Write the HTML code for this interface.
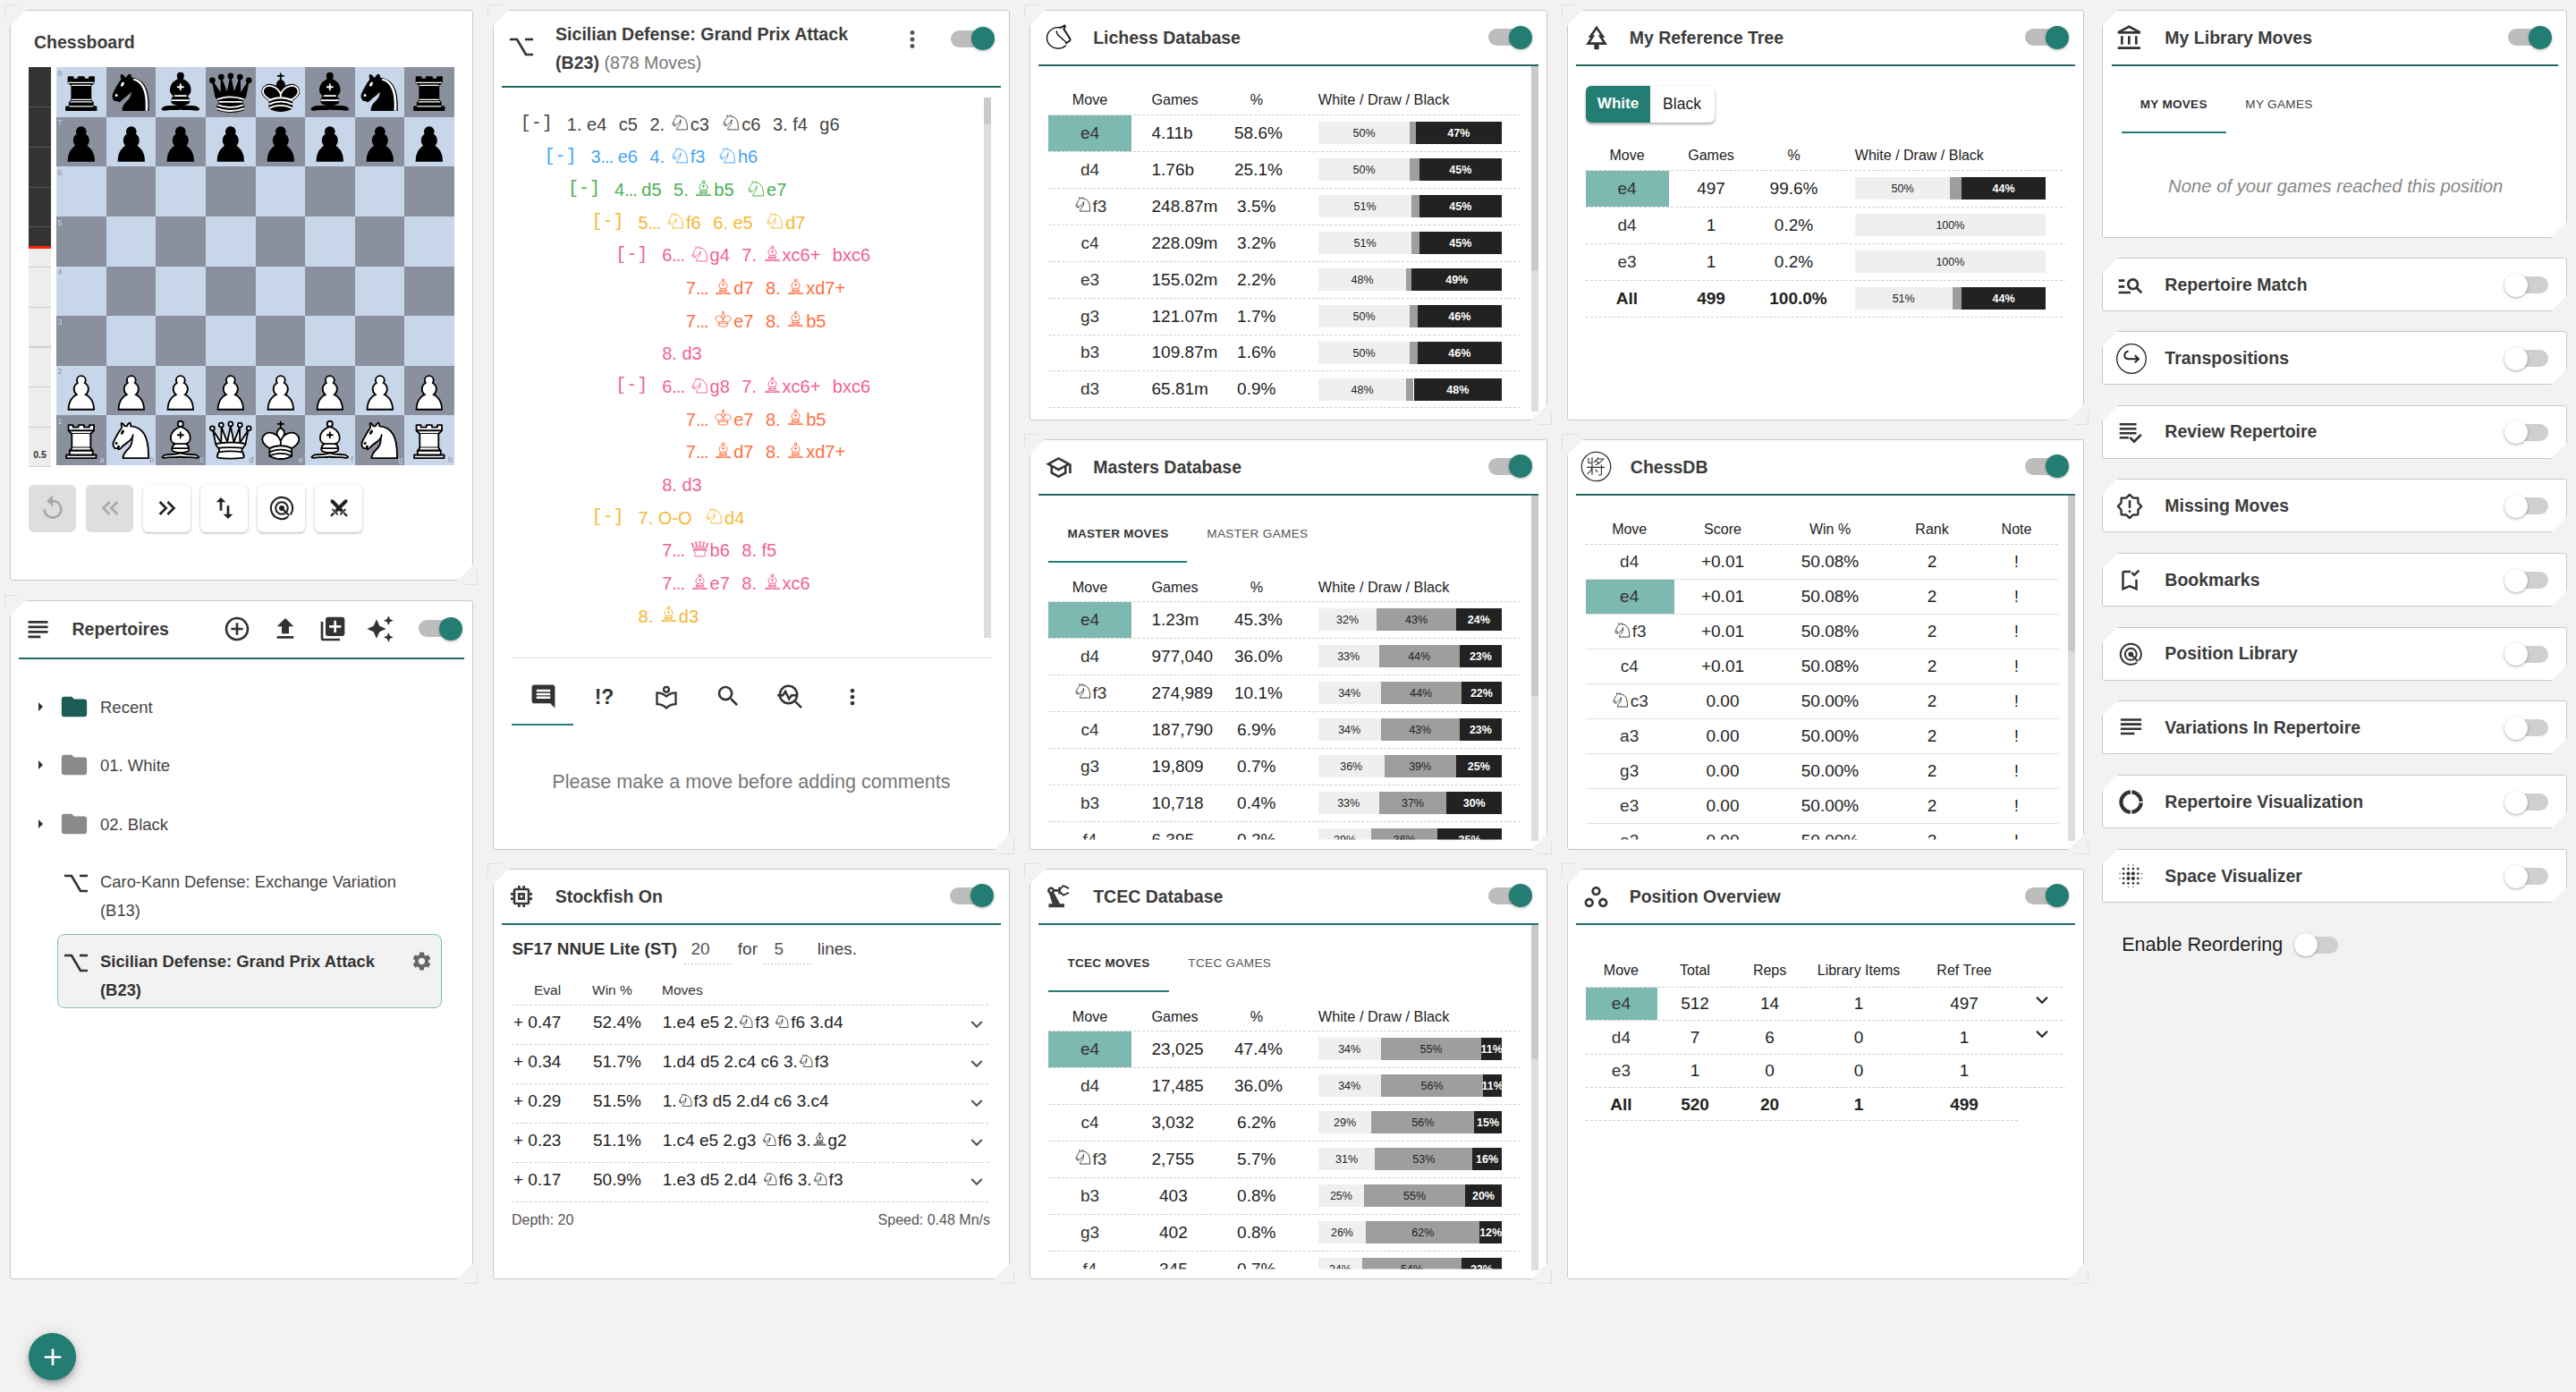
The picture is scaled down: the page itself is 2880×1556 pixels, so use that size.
<!DOCTYPE html><html><head><meta charset="utf-8"><style>
*{box-sizing:border-box}
html,body{margin:0;padding:0}
body{background:#f2f2f2;width:2880px;height:1556px;overflow:hidden;position:relative;font-family:"Liberation Sans",sans-serif;color:#333}
.card{position:absolute;background:#fff;border:1px solid #c8c8c8;border-radius:3px;clip-path:polygon(18px 0,100% 0,100% calc(100% - 18px),calc(100% - 18px) 100%,0 100%,0 18px)}
.brk{position:absolute}
.t{position:absolute;white-space:nowrap;line-height:0}
.tc{transform:translateX(-50%)}
.tr{transform:translateX(-100%)}
.r{position:absolute;display:block}
.clip{position:absolute;left:0;top:0;width:2880px;height:1556px}
.mono{font-family:"Liberation Mono",monospace}
.fgw{display:inline-block;position:relative;height:0;overflow:visible}
</style></head><body><svg width="0" height="0" style="position:absolute"><defs>
<symbol id="wp" viewBox="0 0 45 45"><path d="m 22.5,9 c -2.21,0 -4,1.79 -4,4 0,0.89 0.29,1.71 0.78,2.38 C 17.33,16.5 16,18.59 16,21 c 0,2.03 0.94,3.84 2.41,5.03 C 15.41,27.09 11,31.58 11,39.5 H 34 C 34,31.58 29.59,27.09 26.59,26.03 28.06,24.84 29,23.03 29,21 29,18.59 27.67,16.5 25.72,15.38 26.21,14.71 26.5,13.89 26.5,13 c 0,-2.21 -1.79,-4 -4,-4 z" fill="#fff" stroke="#000" stroke-width="1.5" stroke-linecap="round"/></symbol>
<symbol id="bp" viewBox="0 0 45 45"><path d="m 22.5,9 c -2.21,0 -4,1.79 -4,4 0,0.89 0.29,1.71 0.78,2.38 C 17.33,16.5 16,18.59 16,21 c 0,2.03 0.94,3.84 2.41,5.03 C 15.41,27.09 11,31.58 11,39.5 H 34 C 34,31.58 29.59,27.09 26.59,26.03 28.06,24.84 29,23.03 29,21 29,18.59 27.67,16.5 25.72,15.38 26.21,14.71 26.5,13.89 26.5,13 c 0,-2.21 -1.79,-4 -4,-4 z" fill="#000" stroke="#000" stroke-width="1.5" stroke-linecap="round"/></symbol>
<symbol id="wr" viewBox="0 0 45 45"><g fill="#fff" stroke="#000" stroke-width="1.5" stroke-linecap="round" stroke-linejoin="round"><path d="M 9,39 L 36,39 L 36,36 L 9,36 L 9,39 z" stroke-linecap="butt"/><path d="M 12,36 L 12,32 L 33,32 L 33,36 L 12,36 z" stroke-linecap="butt"/><path d="M 11,14 L 11,9 L 15,9 L 15,11 L 20,11 L 20,9 L 25,9 L 25,11 L 30,11 L 30,9 L 34,9 L 34,14" stroke-linecap="butt"/><path d="M 34,14 L 31,17 L 14,17 L 11,14"/><path d="M 31,17 L 31,29.5 L 14,29.5 L 14,17" stroke-linecap="butt" stroke-linejoin="miter"/><path d="M 31,29.5 L 32.5,32 L 12.5,32 L 14,29.5"/><path d="M 11,14 L 34,14" fill="none" stroke-linejoin="miter"/></g></symbol>
<symbol id="br" viewBox="0 0 45 45"><g fill="#000" stroke="#000" stroke-width="1.5" stroke-linecap="round" stroke-linejoin="round"><path d="M 9,39 L 36,39 L 36,36 L 9,36 L 9,39 z" stroke-linecap="butt"/><path d="M 12.5,32 L 14,29.5 L 31,29.5 L 32.5,32 L 12.5,32 z" stroke-linecap="butt"/><path d="M 12,36 L 12,32 L 33,32 L 33,36 L 12,36 z" stroke-linecap="butt"/><path d="M 14,29.5 L 14,16.5 L 31,16.5 L 31,29.5 L 14,29.5 z" stroke-linecap="butt" stroke-linejoin="miter"/><path d="M 14,16.5 L 11,14 L 34,14 L 31,16.5 L 14,16.5 z" stroke-linecap="butt"/><path d="M 11,14 L 11,9 L 15,9 L 15,11 L 20,11 L 20,9 L 25,9 L 25,11 L 30,11 L 30,9 L 34,9 L 34,14 L 11,14 z" stroke-linecap="butt"/><path d="M 12,35.5 L 33,35.5 M 13,31.5 L 32,31.5 M 14,29.5 L 31,29.5 M 14,16.5 L 31,16.5 M 11,14 L 34,14" fill="none" stroke="#fff" stroke-width="1" stroke-linejoin="miter"/></g></symbol>
<symbol id="wn" viewBox="0 0 45 45"><g fill="none" stroke="#000" stroke-width="1.5" stroke-linecap="round" stroke-linejoin="round"><path d="M 22,10 C 32.5,11 38.5,18 38,39 L 15,39 C 15,30 25,32.5 23,18" fill="#fff"/><path d="M 24,18 C 24.38,20.91 18.45,25.37 16,27 C 13,29 13.18,31.34 11,31 C 9.958,30.06 12.41,27.96 11,28 C 10,28 11.19,29.23 10,30 C 9,30 5.997,31 6,26 C 6,24 12,14 12,14 C 12,14 13.89,12.1 14,10.5 C 13.27,9.506 13.5,8.5 13.5,7.5 C 14.5,6.5 16.5,10 16.5,10 L 18.5,10 C 18.5,10 19.28,8.008 21,7 C 22,7 22,10 22,10" fill="#fff"/><path d="M 9.5 25.5 A 0.5 0.5 0 1 1 8.5,25.5 A 0.5 0.5 0 1 1 9.5 25.5 z" fill="#000"/><path d="M 15 15.5 A 0.5 1.5 0 1 1 14,15.5 A 0.5 1.5 0 1 1 15 15.5 z" transform="matrix(0.866,0.5,-0.5,0.866,9.693,-5.173)" fill="#000"/></g></symbol>
<symbol id="bn" viewBox="0 0 45 45"><g fill="none" stroke="#000" stroke-width="1.5" stroke-linecap="round" stroke-linejoin="round"><path d="M 22,10 C 32.5,11 38.5,18 38,39 L 15,39 C 15,30 25,32.5 23,18" fill="#000"/><path d="M 24,18 C 24.38,20.91 18.45,25.37 16,27 C 13,29 13.18,31.34 11,31 C 9.958,30.06 12.41,27.96 11,28 C 10,28 11.19,29.23 10,30 C 9,30 5.997,31 6,26 C 6,24 12,14 12,14 C 12,14 13.89,12.1 14,10.5 C 13.27,9.506 13.5,8.5 13.5,7.5 C 14.5,6.5 16.5,10 16.5,10 L 18.5,10 C 18.5,10 19.28,8.008 21,7 C 22,7 22,10 22,10" fill="#000"/><path d="M 9.5 25.5 A 0.5 0.5 0 1 1 8.5,25.5 A 0.5 0.5 0 1 1 9.5 25.5 z" fill="#fff" stroke="#fff"/><path d="M 15 15.5 A 0.5 1.5 0 1 1 14,15.5 A 0.5 1.5 0 1 1 15 15.5 z" transform="matrix(0.866,0.5,-0.5,0.866,9.693,-5.173)" fill="#fff" stroke="#fff"/><path d="M 24.55,10.4 L 24.1,11.85 L 24.6,12 C 27.75,13 30.25,14.49 32.5,18.75 C 34.75,23.01 35.75,29.06 35.25,39 L 35.2,39.5 L 37.45,39.5 L 37.5,39 C 38,28.94 36.62,22.15 34.25,17.66 C 31.88,13.17 28.46,11.02 25.06,10.5 L 24.55,10.4 z" fill="#fff" stroke="none"/></g></symbol>
<symbol id="wb" viewBox="0 0 45 45"><g fill="none" stroke="#000" stroke-width="1.5" stroke-linecap="round" stroke-linejoin="round"><g fill="#fff" stroke-linecap="butt"><path d="M 9,36 C 12.39,35.03 19.11,36.43 22.5,34 C 25.89,36.43 32.61,35.03 36,36 C 36,36 37.65,36.54 39,38 C 38.32,38.97 37.35,38.99 36,38.5 C 32.61,37.53 25.89,38.96 22.5,37.5 C 19.11,38.96 12.39,37.53 9,38.5 C 7.65,38.99 6.68,38.97 6,38 C 7.35,36.54 9,36 9,36 z"/><path d="M 15,32 C 17.5,34.5 27.5,34.5 30,32 C 30.5,30.5 30,30 30,30 C 30,27.5 27.5,26 27.5,26 C 33,24.5 33.5,14.5 22.5,10.5 C 11.5,14.5 12,24.5 17.5,26 C 17.5,26 15,27.5 15,30 C 15,30 14.5,30.5 15,32 z"/><path d="M 25 8 A 2.5 2.5 0 1 1 20,8 A 2.5 2.5 0 1 1 25 8 z"/></g><path d="M 17.5,26 L 27.5,26 M 15,30 L 30,30 M 22.5,15.5 L 22.5,20.5 M 20,18 L 25,18" stroke-linejoin="miter"/></g></symbol>
<symbol id="bb" viewBox="0 0 45 45"><g fill="none" stroke="#000" stroke-width="1.5" stroke-linecap="round" stroke-linejoin="round"><g fill="#000" stroke-linecap="butt"><path d="M 9,36 C 12.39,35.03 19.11,36.43 22.5,34 C 25.89,36.43 32.61,35.03 36,36 C 36,36 37.65,36.54 39,38 C 38.32,38.97 37.35,38.99 36,38.5 C 32.61,37.53 25.89,38.96 22.5,37.5 C 19.11,38.96 12.39,37.53 9,38.5 C 7.65,38.99 6.68,38.97 6,38 C 7.35,36.54 9,36 9,36 z"/><path d="M 15,32 C 17.5,34.5 27.5,34.5 30,32 C 30.5,30.5 30,30 30,30 C 30,27.5 27.5,26 27.5,26 C 33,24.5 33.5,14.5 22.5,10.5 C 11.5,14.5 12,24.5 17.5,26 C 17.5,26 15,27.5 15,30 C 15,30 14.5,30.5 15,32 z"/><path d="M 25 8 A 2.5 2.5 0 1 1 20,8 A 2.5 2.5 0 1 1 25 8 z"/></g><path d="M 17.5,26 L 27.5,26 M 15,30 L 30,30 M 22.5,15.5 L 22.5,20.5 M 20,18 L 25,18" stroke="#fff" stroke-linejoin="miter"/></g></symbol>
<symbol id="wq" viewBox="0 0 45 45"><g fill="#fff" stroke="#000" stroke-width="1.5" stroke-linejoin="round"><path d="M 9,26 C 17.5,24.5 30,24.5 36,26 L 38.5,13.5 L 31,25 L 30.7,10.9 L 25.5,24.5 L 22.5,10 L 19.5,24.5 L 14.3,10.9 L 14,25 L 6.5,13.5 L 9,26 z"/><path d="M 9,26 C 9,28 10.5,28 11.5,30 C 12.5,31.5 12.5,31 12,33.5 C 10.5,34.5 11,36 11,36 C 9.5,37.5 11,38.5 11,38.5 C 17.5,39.5 27.5,39.5 34,38.5 C 34,38.5 35.5,37.5 34,36 C 34,36 34.5,34.5 33,33.5 C 32.5,31 32.5,31.5 33.5,30 C 34.5,28 36,28 36,26 C 27.5,24.5 17.5,24.5 9,26 z"/><path d="M 11.5,30 C 15,29 30,29 33.5,30" fill="none"/><path d="M 12,33.5 C 18,32.5 27,32.5 33,33.5" fill="none"/><circle cx="6" cy="12" r="2"/><circle cx="14" cy="9" r="2"/><circle cx="22.5" cy="8" r="2"/><circle cx="31" cy="9" r="2"/><circle cx="39" cy="12" r="2"/></g></symbol>
<symbol id="bq" viewBox="0 0 45 45"><g fill="#000" stroke="#000" stroke-width="1.5" stroke-linecap="round" stroke-linejoin="round"><path d="M 9,26 C 17.5,24.5 30,24.5 36,26 L 38.5,13.5 L 31,25 L 30.7,10.9 L 25.5,24.5 L 22.5,10 L 19.5,24.5 L 14.3,10.9 L 14,25 L 6.5,13.5 L 9,26 z" stroke-linecap="butt"/><path d="m 9,26 c 0,2 1.5,2 2.5,4 1,1.5 1,1 0.5,3.5 -1.5,1 -1,2.5 -1,2.5 -1.5,1.5 0,2.5 0,2.5 6.5,1 16.5,1 23,0 0,0 1.5,-1 0,-2.5 0,0 0.5,-1.5 -1,-2.5 -0.5,-2.5 -0.5,-2 0.5,-3.5 1,-2 2.5,-2 2.5,-4 -8.5,-1.5 -18.5,-1.5 -27,0 z"/><path d="M 11.5,30 C 15,29 30,29 33.5,30"/><path d="m 12,33.5 c 6,-1 15,-1 21,0"/><circle cx="6" cy="12" r="2"/><circle cx="14" cy="9" r="2"/><circle cx="22.5" cy="8" r="2"/><circle cx="31" cy="9" r="2"/><circle cx="39" cy="12" r="2"/><path d="M 11,38.5 A 35,35 1 0 0 34,38.5" fill="none" stroke-linecap="butt"/><g fill="none" stroke="#fff"><path d="M 11,29 A 35,35 1 0 1 34,29"/><path d="M 12.5,31.5 L 32.5,31.5"/><path d="M 11.5,34.5 A 35,35 1 0 0 33.5,34.5"/><path d="M 10.5,37.5 A 35,35 1 0 0 34.5,37.5"/></g></g></symbol>
<symbol id="wk" viewBox="0 0 45 45"><g fill="none" stroke="#000" stroke-width="1.5" stroke-linecap="round" stroke-linejoin="round"><path d="M 22.5,11.63 L 22.5,6" stroke-linejoin="miter"/><path d="M 20,8 L 25,8" stroke-linejoin="miter"/><path d="M 22.5,25 C 22.5,25 27,17.5 25.5,14.5 C 25.5,14.5 24.5,12 22.5,12 C 20.5,12 19.5,14.5 19.5,14.5 C 18,17.5 22.5,25 22.5,25" fill="#fff" stroke-linecap="butt" stroke-linejoin="miter"/><path d="M 12.5,37 C 18,40.5 27,40.5 32.5,37 L 32.5,30 C 32.5,30 41.5,25.5 38.5,19.5 C 34.5,13 25,16 22.5,23.5 L 22.5,27 L 22.5,23.5 C 20,16 10.5,13 6.5,19.5 C 3.5,25.5 12.5,30 12.5,30 L 12.5,37" fill="#fff"/><path d="M 12.5,30 C 18,27 27,27 32.5,30"/><path d="M 12.5,33.5 C 18,30.5 27,30.5 32.5,33.5"/><path d="M 12.5,37 C 18,34 27,34 32.5,37"/></g></symbol>
<symbol id="bk" viewBox="0 0 45 45"><g fill="none" stroke="#000" stroke-width="1.5" stroke-linecap="round" stroke-linejoin="round"><path d="M 22.5,11.63 L 22.5,6" stroke-linejoin="miter"/><path d="M 22.5,25 C 22.5,25 27,17.5 25.5,14.5 C 25.5,14.5 24.5,12 22.5,12 C 20.5,12 19.5,14.5 19.5,14.5 C 18,17.5 22.5,25 22.5,25" fill="#000" stroke-linecap="butt" stroke-linejoin="miter"/><path d="M 12.5,37 C 18,40.5 27,40.5 32.5,37 L 32.5,30 C 32.5,30 41.5,25.5 38.5,19.5 C 34.5,13 25,16 22.5,23.5 L 22.5,27 L 22.5,23.5 C 20,16 10.5,13 6.5,19.5 C 3.5,25.5 12.5,30 12.5,30 L 12.5,37" fill="#000"/><path d="M 20,8 L 25,8" stroke-linejoin="miter"/><path d="M 32,29.5 C 32,29.5 40.5,25.5 38.03,19.85 C 34.15,14 25,18 22.5,24.5 L 22.5,26.6 L 22.5,24.5 C 20,18 10.85,14 6.97,19.85 C 4.5,25.5 13,29.5 13,29.5" stroke="#fff"/><path d="M 12.5,30 C 18,27 27,27 32.5,30 M 12.5,33.5 C 18,30.5 27,30.5 32.5,33.5 M 12.5,37 C 18,34 27,34 32.5,37" stroke="#fff"/></g></symbol>
<symbol id="fn" viewBox="0 0 45 45"><g fill="none" stroke="currentColor" stroke-width="1.9" stroke-linecap="round" stroke-linejoin="round"><path d="M 22,10 C 32.5,11 38.5,18 38,39 L 15,39 C 15,30 25,32.5 23,18"/><path d="M 24,18 C 24.38,20.91 18.45,25.37 16,27 C 13,29 13.18,31.34 11,31 C 9.958,30.06 12.41,27.96 11,28 C 10,28 11.19,29.23 10,30 C 9,30 5.997,31 6,26 C 6,24 12,14 12,14 C 12,14 13.89,12.1 14,10.5 C 13.27,9.506 13.5,8.5 13.5,7.5 C 14.5,6.5 16.5,10 16.5,10 L 18.5,10 C 18.5,10 19.28,8.008 21,7 C 22,7 22,10 22,10"/><path d="M 9.5 25.5 A 0.5 0.5 0 1 1 8.5,25.5 A 0.5 0.5 0 1 1 9.5 25.5 z"/></g></symbol>
<symbol id="fb" viewBox="0 0 45 45"><g fill="none" stroke="currentColor" stroke-width="1.9" stroke-linecap="round" stroke-linejoin="round"><path d="M 9,36 C 12.39,35.03 19.11,36.43 22.5,34 C 25.89,36.43 32.61,35.03 36,36 C 36,36 37.65,36.54 39,38 C 38.32,38.97 37.35,38.99 36,38.5 C 32.61,37.53 25.89,38.96 22.5,37.5 C 19.11,38.96 12.39,37.53 9,38.5 C 7.65,38.99 6.68,38.97 6,38 C 7.35,36.54 9,36 9,36 z"/><path d="M 15,32 C 17.5,34.5 27.5,34.5 30,32 C 30.5,30.5 30,30 30,30 C 30,27.5 27.5,26 27.5,26 C 33,24.5 33.5,14.5 22.5,10.5 C 11.5,14.5 12,24.5 17.5,26 C 17.5,26 15,27.5 15,30 C 15,30 14.5,30.5 15,32 z"/><path d="M 25 8 A 2.5 2.5 0 1 1 20,8 A 2.5 2.5 0 1 1 25 8 z"/><path d="M 17.5,26 L 27.5,26 M 15,30 L 30,30 M 22.5,15.5 L 22.5,20.5 M 20,18 L 25,18"/></g></symbol>
<symbol id="fk" viewBox="0 0 45 45"><g fill="none" stroke="currentColor" stroke-width="1.9" stroke-linecap="round" stroke-linejoin="round"><path d="M 22.5,11.63 L 22.5,6"/><path d="M 20,8 L 25,8"/><path d="M 22.5,25 C 22.5,25 27,17.5 25.5,14.5 C 25.5,14.5 24.5,12 22.5,12 C 20.5,12 19.5,14.5 19.5,14.5 C 18,17.5 22.5,25 22.5,25"/><path d="M 12.5,37 C 18,40.5 27,40.5 32.5,37 L 32.5,30 C 32.5,30 41.5,25.5 38.5,19.5 C 34.5,13 25,16 22.5,23.5 L 22.5,27 L 22.5,23.5 C 20,16 10.5,13 6.5,19.5 C 3.5,25.5 12.5,30 12.5,30 L 12.5,37"/><path d="M 12.5,30 C 18,27 27,27 32.5,30"/><path d="M 12.5,33.5 C 18,30.5 27,30.5 32.5,33.5"/></g></symbol>
<symbol id="fq" viewBox="0 0 45 45"><g fill="none" stroke="currentColor" stroke-width="1.9" stroke-linejoin="round"><path d="M 9,26 C 17.5,24.5 30,24.5 36,26 L 38.5,13.5 L 31,25 L 30.7,10.9 L 25.5,24.5 L 22.5,10 L 19.5,24.5 L 14.3,10.9 L 14,25 L 6.5,13.5 L 9,26 z"/><path d="M 9,26 C 9,28 10.5,28 11.5,30 C 12.5,31.5 12.5,31 12,33.5 C 10.5,34.5 11,36 11,36 C 9.5,37.5 11,38.5 11,38.5 C 17.5,39.5 27.5,39.5 34,38.5 C 34,38.5 35.5,37.5 34,36 C 34,36 34.5,34.5 33,33.5 C 32.5,31 32.5,31.5 33.5,30 C 34.5,28 36,28 36,26 C 27.5,24.5 17.5,24.5 9,26 z"/><circle cx="6" cy="12" r="2"/><circle cx="14" cy="9" r="2"/><circle cx="22.5" cy="8" r="2"/><circle cx="31" cy="9" r="2"/><circle cx="39" cy="12" r="2"/></g></symbol>
</defs></svg><div class="card " style="left:11px;top:11px;width:518px;height:638px"></div><div class="brk" style="left:5px;top:5px;width:15px;height:15px;border-left:1px solid #e0e0e0;border-top:1px solid #e0e0e0"></div><div class="brk" style="left:519px;top:639px;width:15px;height:15px;border-right:1px solid #e0e0e0;border-bottom:1px solid #e0e0e0"></div><div class="t " style="left:38px;top:47px;font-size:19.5px;font-weight:700;color:#3b3b3b;">Chessboard</div><div class="r" style="left:32px;top:75px;width:25px;height:200px;background:#333"></div><div class="r" style="left:32px;top:275px;width:25px;height:3px;background:#ff2200"></div><div class="r" style="left:32px;top:278px;width:25px;height:244px;background:#ededed"></div><div class="r" style="left:32px;top:119.2px;width:25px;height:1.2px;background:#555"></div><div class="r" style="left:32px;top:163.9px;width:25px;height:1.2px;background:#555"></div><div class="r" style="left:32px;top:208.60000000000002px;width:25px;height:1.2px;background:#555"></div><div class="r" style="left:32px;top:253.3px;width:25px;height:1.2px;background:#555"></div><div class="r" style="left:32px;top:298.0px;width:25px;height:1.2px;background:#cfcfcf"></div><div class="r" style="left:32px;top:342.70000000000005px;width:25px;height:1.2px;background:#cfcfcf"></div><div class="r" style="left:32px;top:387.40000000000003px;width:25px;height:1.2px;background:#cfcfcf"></div><div class="r" style="left:32px;top:432.1px;width:25px;height:1.2px;background:#cfcfcf"></div><div class="r" style="left:32px;top:476.8px;width:25px;height:1.2px;background:#cfcfcf"></div><div class="r" style="left:32px;top:520.5px;width:25px;height:1.5px;background:#cfcfcf"></div><div class="t tc" style="left:44.5px;top:508px;font-size:10.5px;font-weight:700;color:#333;">0.5</div><div class="r" style="left:63.0px;top:75.0px;width:56.025px;height:56.025px;background:#c8d6ea"></div><div class="r" style="left:118.625px;top:75.0px;width:56.025px;height:56.025px;background:#8a909e"></div><div class="r" style="left:174.25px;top:75.0px;width:56.025px;height:56.025px;background:#c8d6ea"></div><div class="r" style="left:229.875px;top:75.0px;width:56.025px;height:56.025px;background:#8a909e"></div><div class="r" style="left:285.5px;top:75.0px;width:56.025px;height:56.025px;background:#c8d6ea"></div><div class="r" style="left:341.125px;top:75.0px;width:56.025px;height:56.025px;background:#8a909e"></div><div class="r" style="left:396.75px;top:75.0px;width:56.025px;height:56.025px;background:#c8d6ea"></div><div class="r" style="left:452.375px;top:75.0px;width:56.025px;height:56.025px;background:#8a909e"></div><div class="r" style="left:63.0px;top:130.625px;width:56.025px;height:56.025px;background:#8a909e"></div><div class="r" style="left:118.625px;top:130.625px;width:56.025px;height:56.025px;background:#c8d6ea"></div><div class="r" style="left:174.25px;top:130.625px;width:56.025px;height:56.025px;background:#8a909e"></div><div class="r" style="left:229.875px;top:130.625px;width:56.025px;height:56.025px;background:#c8d6ea"></div><div class="r" style="left:285.5px;top:130.625px;width:56.025px;height:56.025px;background:#8a909e"></div><div class="r" style="left:341.125px;top:130.625px;width:56.025px;height:56.025px;background:#c8d6ea"></div><div class="r" style="left:396.75px;top:130.625px;width:56.025px;height:56.025px;background:#8a909e"></div><div class="r" style="left:452.375px;top:130.625px;width:56.025px;height:56.025px;background:#c8d6ea"></div><div class="r" style="left:63.0px;top:186.25px;width:56.025px;height:56.025px;background:#c8d6ea"></div><div class="r" style="left:118.625px;top:186.25px;width:56.025px;height:56.025px;background:#8a909e"></div><div class="r" style="left:174.25px;top:186.25px;width:56.025px;height:56.025px;background:#c8d6ea"></div><div class="r" style="left:229.875px;top:186.25px;width:56.025px;height:56.025px;background:#8a909e"></div><div class="r" style="left:285.5px;top:186.25px;width:56.025px;height:56.025px;background:#c8d6ea"></div><div class="r" style="left:341.125px;top:186.25px;width:56.025px;height:56.025px;background:#8a909e"></div><div class="r" style="left:396.75px;top:186.25px;width:56.025px;height:56.025px;background:#c8d6ea"></div><div class="r" style="left:452.375px;top:186.25px;width:56.025px;height:56.025px;background:#8a909e"></div><div class="r" style="left:63.0px;top:241.875px;width:56.025px;height:56.025px;background:#8a909e"></div><div class="r" style="left:118.625px;top:241.875px;width:56.025px;height:56.025px;background:#c8d6ea"></div><div class="r" style="left:174.25px;top:241.875px;width:56.025px;height:56.025px;background:#8a909e"></div><div class="r" style="left:229.875px;top:241.875px;width:56.025px;height:56.025px;background:#c8d6ea"></div><div class="r" style="left:285.5px;top:241.875px;width:56.025px;height:56.025px;background:#8a909e"></div><div class="r" style="left:341.125px;top:241.875px;width:56.025px;height:56.025px;background:#c8d6ea"></div><div class="r" style="left:396.75px;top:241.875px;width:56.025px;height:56.025px;background:#8a909e"></div><div class="r" style="left:452.375px;top:241.875px;width:56.025px;height:56.025px;background:#c8d6ea"></div><div class="r" style="left:63.0px;top:297.5px;width:56.025px;height:56.025px;background:#c8d6ea"></div><div class="r" style="left:118.625px;top:297.5px;width:56.025px;height:56.025px;background:#8a909e"></div><div class="r" style="left:174.25px;top:297.5px;width:56.025px;height:56.025px;background:#c8d6ea"></div><div class="r" style="left:229.875px;top:297.5px;width:56.025px;height:56.025px;background:#8a909e"></div><div class="r" style="left:285.5px;top:297.5px;width:56.025px;height:56.025px;background:#c8d6ea"></div><div class="r" style="left:341.125px;top:297.5px;width:56.025px;height:56.025px;background:#8a909e"></div><div class="r" style="left:396.75px;top:297.5px;width:56.025px;height:56.025px;background:#c8d6ea"></div><div class="r" style="left:452.375px;top:297.5px;width:56.025px;height:56.025px;background:#8a909e"></div><div class="r" style="left:63.0px;top:353.125px;width:56.025px;height:56.025px;background:#8a909e"></div><div class="r" style="left:118.625px;top:353.125px;width:56.025px;height:56.025px;background:#c8d6ea"></div><div class="r" style="left:174.25px;top:353.125px;width:56.025px;height:56.025px;background:#8a909e"></div><div class="r" style="left:229.875px;top:353.125px;width:56.025px;height:56.025px;background:#c8d6ea"></div><div class="r" style="left:285.5px;top:353.125px;width:56.025px;height:56.025px;background:#8a909e"></div><div class="r" style="left:341.125px;top:353.125px;width:56.025px;height:56.025px;background:#c8d6ea"></div><div class="r" style="left:396.75px;top:353.125px;width:56.025px;height:56.025px;background:#8a909e"></div><div class="r" style="left:452.375px;top:353.125px;width:56.025px;height:56.025px;background:#c8d6ea"></div><div class="r" style="left:63.0px;top:408.75px;width:56.025px;height:56.025px;background:#c8d6ea"></div><div class="r" style="left:118.625px;top:408.75px;width:56.025px;height:56.025px;background:#8a909e"></div><div class="r" style="left:174.25px;top:408.75px;width:56.025px;height:56.025px;background:#c8d6ea"></div><div class="r" style="left:229.875px;top:408.75px;width:56.025px;height:56.025px;background:#8a909e"></div><div class="r" style="left:285.5px;top:408.75px;width:56.025px;height:56.025px;background:#c8d6ea"></div><div class="r" style="left:341.125px;top:408.75px;width:56.025px;height:56.025px;background:#8a909e"></div><div class="r" style="left:396.75px;top:408.75px;width:56.025px;height:56.025px;background:#c8d6ea"></div><div class="r" style="left:452.375px;top:408.75px;width:56.025px;height:56.025px;background:#8a909e"></div><div class="r" style="left:63.0px;top:464.375px;width:56.025px;height:56.025px;background:#8a909e"></div><div class="r" style="left:118.625px;top:464.375px;width:56.025px;height:56.025px;background:#c8d6ea"></div><div class="r" style="left:174.25px;top:464.375px;width:56.025px;height:56.025px;background:#8a909e"></div><div class="r" style="left:229.875px;top:464.375px;width:56.025px;height:56.025px;background:#c8d6ea"></div><div class="r" style="left:285.5px;top:464.375px;width:56.025px;height:56.025px;background:#8a909e"></div><div class="r" style="left:341.125px;top:464.375px;width:56.025px;height:56.025px;background:#c8d6ea"></div><div class="r" style="left:396.75px;top:464.375px;width:56.025px;height:56.025px;background:#8a909e"></div><div class="r" style="left:452.375px;top:464.375px;width:56.025px;height:56.025px;background:#c8d6ea"></div><svg class="r" style="left:63.01px;top:75.01px" width="55.6" height="55.6"><use href="#br"/></svg><svg class="r" style="left:118.64px;top:75.01px" width="55.6" height="55.6"><use href="#bn"/></svg><svg class="r" style="left:174.26px;top:75.01px" width="55.6" height="55.6"><use href="#bb"/></svg><svg class="r" style="left:229.89px;top:75.01px" width="55.6" height="55.6"><use href="#bq"/></svg><svg class="r" style="left:285.51px;top:75.01px" width="55.6" height="55.6"><use href="#bk"/></svg><svg class="r" style="left:341.14px;top:75.01px" width="55.6" height="55.6"><use href="#bb"/></svg><svg class="r" style="left:396.76px;top:75.01px" width="55.6" height="55.6"><use href="#bn"/></svg><svg class="r" style="left:452.39px;top:75.01px" width="55.6" height="55.6"><use href="#br"/></svg><svg class="r" style="left:63.01px;top:130.64px" width="55.6" height="55.6"><use href="#bp"/></svg><svg class="r" style="left:118.64px;top:130.64px" width="55.6" height="55.6"><use href="#bp"/></svg><svg class="r" style="left:174.26px;top:130.64px" width="55.6" height="55.6"><use href="#bp"/></svg><svg class="r" style="left:229.89px;top:130.64px" width="55.6" height="55.6"><use href="#bp"/></svg><svg class="r" style="left:285.51px;top:130.64px" width="55.6" height="55.6"><use href="#bp"/></svg><svg class="r" style="left:341.14px;top:130.64px" width="55.6" height="55.6"><use href="#bp"/></svg><svg class="r" style="left:396.76px;top:130.64px" width="55.6" height="55.6"><use href="#bp"/></svg><svg class="r" style="left:452.39px;top:130.64px" width="55.6" height="55.6"><use href="#bp"/></svg><svg class="r" style="left:63.01px;top:408.76px" width="55.6" height="55.6"><use href="#wp"/></svg><svg class="r" style="left:118.64px;top:408.76px" width="55.6" height="55.6"><use href="#wp"/></svg><svg class="r" style="left:174.26px;top:408.76px" width="55.6" height="55.6"><use href="#wp"/></svg><svg class="r" style="left:229.89px;top:408.76px" width="55.6" height="55.6"><use href="#wp"/></svg><svg class="r" style="left:285.51px;top:408.76px" width="55.6" height="55.6"><use href="#wp"/></svg><svg class="r" style="left:341.14px;top:408.76px" width="55.6" height="55.6"><use href="#wp"/></svg><svg class="r" style="left:396.76px;top:408.76px" width="55.6" height="55.6"><use href="#wp"/></svg><svg class="r" style="left:452.39px;top:408.76px" width="55.6" height="55.6"><use href="#wp"/></svg><svg class="r" style="left:63.01px;top:464.39px" width="55.6" height="55.6"><use href="#wr"/></svg><svg class="r" style="left:118.64px;top:464.39px" width="55.6" height="55.6"><use href="#wn"/></svg><svg class="r" style="left:174.26px;top:464.39px" width="55.6" height="55.6"><use href="#wb"/></svg><svg class="r" style="left:229.89px;top:464.39px" width="55.6" height="55.6"><use href="#wq"/></svg><svg class="r" style="left:285.51px;top:464.39px" width="55.6" height="55.6"><use href="#wk"/></svg><svg class="r" style="left:341.14px;top:464.39px" width="55.6" height="55.6"><use href="#wb"/></svg><svg class="r" style="left:396.76px;top:464.39px" width="55.6" height="55.6"><use href="#wn"/></svg><svg class="r" style="left:452.39px;top:464.39px" width="55.6" height="55.6"><use href="#wr"/></svg><div class="t " style="left:64.3px;top:81.7px;font-size:9px;font-weight:400;color:#8a909e;">8</div><div class="t " style="left:64.3px;top:137.325px;font-size:9px;font-weight:400;color:#c8d6ea;">7</div><div class="t " style="left:64.3px;top:192.95px;font-size:9px;font-weight:400;color:#8a909e;">6</div><div class="t " style="left:64.3px;top:248.575px;font-size:9px;font-weight:400;color:#c8d6ea;">5</div><div class="t " style="left:64.3px;top:304.2px;font-size:9px;font-weight:400;color:#8a909e;">4</div><div class="t " style="left:64.3px;top:359.825px;font-size:9px;font-weight:400;color:#c8d6ea;">3</div><div class="t " style="left:64.3px;top:415.45px;font-size:9px;font-weight:400;color:#8a909e;">2</div><div class="t " style="left:64.3px;top:471.075px;font-size:9px;font-weight:400;color:#c8d6ea;">1</div><div class="t tr" style="left:116.625px;top:513.5px;font-size:9px;font-weight:400;color:#c8d6ea;">a</div><div class="t tr" style="left:172.25px;top:513.5px;font-size:9px;font-weight:400;color:#8a909e;">b</div><div class="t tr" style="left:227.875px;top:513.5px;font-size:9px;font-weight:400;color:#c8d6ea;">c</div><div class="t tr" style="left:283.5px;top:513.5px;font-size:9px;font-weight:400;color:#8a909e;">d</div><div class="t tr" style="left:339.125px;top:513.5px;font-size:9px;font-weight:400;color:#c8d6ea;">e</div><div class="t tr" style="left:394.75px;top:513.5px;font-size:9px;font-weight:400;color:#8a909e;">f</div><div class="t tr" style="left:450.375px;top:513.5px;font-size:9px;font-weight:400;color:#c8d6ea;">g</div><div class="t tr" style="left:506.0px;top:513.5px;font-size:9px;font-weight:400;color:#8a909e;">h</div><div class="r" style="left:32px;top:542px;width:53px;height:53px;background:#dedede;border-radius:6px"></div><svg class="r" style="left:42.5px;top:551.5px;" width="32" height="32" viewBox="0 0 24 24" fill="#a8a8a8"><path d="M12 5V1L7 6l5 5V7c3.31 0 6 2.69 6 6s-2.69 6-6 6-6-2.69-6-6H4c0 4.42 3.58 8 8 8s8-3.58 8-8-3.58-8-8-8z"/></svg><div class="r" style="left:96px;top:542px;width:53px;height:53px;background:#dedede;border-radius:6px"></div><svg class="r" style="left:106.5px;top:551.5px;" width="32" height="32" viewBox="0 0 24 24" fill="#a8a8a8"><path d="M17.59 18L19 16.59 14.42 12 19 7.41 17.59 6l-6 6zM11 18l1.41-1.41L7.83 12l4.58-4.59L11 6l-6 6z"/></svg><div class="r" style="left:160px;top:542px;width:53px;height:53px;background:#fff;border-radius:6px;box-shadow:0 1px 3px rgba(0,0,0,.25),0 1px 1px rgba(0,0,0,.08)"></div><svg class="r" style="left:170.5px;top:551.5px;" width="32" height="32" viewBox="0 0 24 24" fill="#222"><path d="M6.41 6L5 7.41 9.58 12 5 16.59 6.41 18l6-6zM13 6l-1.41 1.41L16.17 12l-4.58 4.59L13 18l6-6z"/></svg><div class="r" style="left:224px;top:542px;width:53px;height:53px;background:#fff;border-radius:6px;box-shadow:0 1px 3px rgba(0,0,0,.25),0 1px 1px rgba(0,0,0,.08)"></div><svg class="r" style="left:234.5px;top:551.5px;" width="32" height="32" viewBox="0 0 24 24" fill="#222"><path d="M16 17.01V10h-2v7.01h-3L15 21l4-3.99h-3zM9 3L5 6.99h3V14h2V6.99h3L9 3z"/></svg><div class="r" style="left:288px;top:542px;width:53px;height:53px;background:#fff;border-radius:6px;box-shadow:0 1px 3px rgba(0,0,0,.25),0 1px 1px rgba(0,0,0,.08)"></div><svg class="r" style="left:300.80px;top:553.80px" width="28.00" height="28.00" viewBox="0 0 28 28" fill="none" stroke="#222" stroke-width="2.1"><path d="M23.66 21.28A12.1 12.1 0 1 0 21.28 23.66"/><circle cx="14" cy="14" r="6.8"/><path d="M14 14L22.3 22.3"/><circle cx="14" cy="14" r="2" fill="#222"/></svg><div class="r" style="left:352px;top:542px;width:53px;height:53px;background:#fff;border-radius:6px;box-shadow:0 1px 3px rgba(0,0,0,.25),0 1px 1px rgba(0,0,0,.08)"></div><svg class="r" style="left:364.5px;top:554.5px;" width="28" height="28" viewBox="0 0 24 24" fill="#222"><g transform="translate(0 -1)"><g transform="rotate(45 12 12)"><path d="M12 0.7L13.7 2.5V16.2H10.3V2.5z"/><rect x="8.3" y="16.6" width="7.4" height="1.5"/><rect x="11" y="18.6" width="2" height="4.6" rx="1"/></g><g transform="rotate(-45 12 12)"><path d="M12 0.7L13.7 2.5V16.2H10.3V2.5z"/><rect x="8.3" y="16.6" width="7.4" height="1.5"/><rect x="11" y="18.6" width="2" height="4.6" rx="1"/></g></g></svg><div class="card " style="left:11px;top:671px;width:518px;height:759px"></div><div class="brk" style="left:5px;top:665px;width:15px;height:15px;border-left:1px solid #e0e0e0;border-top:1px solid #e0e0e0"></div><div class="brk" style="left:519px;top:1420px;width:15px;height:15px;border-right:1px solid #e0e0e0;border-bottom:1px solid #e0e0e0"></div><svg class="r" style="left:26.4px;top:686.8px;" width="33" height="33" viewBox="0 0 24 24" fill="#333"><path d="M14 17H4v2h10v-2zm6-8H4v2h16V9zM4 15h16v-2H4v2zM4 5v2h16V5H4z"/></svg><div class="t " style="left:80.5px;top:703px;font-size:19.5px;font-weight:700;color:#3b3b3b;">Repertoires</div><svg class="r" style="left:248.8px;top:687px;" width="32" height="32" viewBox="0 0 24 24" fill="#333"><path d="M13 7h-2v4H7v2h4v4h2v-4h4v-2h-4V7zm-1-5C6.48 2 2 6.48 2 12s4.48 10 10 10 10-4.48 10-10S17.52 2 12 2zm0 18c-4.41 0-8-3.59-8-8s3.59-8 8-8 8 3.59 8 8-3.59 8-8 8z"/></svg><svg class="r" style="left:302.6px;top:687px;" width="32" height="32" viewBox="0 0 24 24" fill="#333"><path d="M5 20h14v-2H5v2zm0-10h4v6h6v-6h4l-7-7-7 7z"/></svg><svg class="r" style="left:355.5px;top:687px;" width="32" height="32" viewBox="0 0 24 24" fill="#333"><path d="M4 6H2v14c0 1.1.9 2 2 2h14v-2H4V6zm16-4H8c-1.1 0-2 .9-2 2v12c0 1.1.9 2 2 2h12c1.1 0 2-.9 2-2V4c0-1.1-.9-2-2-2zm-1 9h-4v4h-2v-4H9V9h4V5h2v4h4v2z"/></svg><svg class="r" style="left:409.3px;top:687px;" width="32" height="32" viewBox="0 0 24 24" fill="#333"><path d="M19 9l1.25-2.75L23 5l-2.75-1.25L19 1l-1.25 2.75L15 5l2.75 1.25L19 9zm-7.5.5L9 4 6.5 9.5 1 12l5.5 2.5L9 20l2.5-5.5L17 12l-5.5-2.5zM19 15l-1.25 2.75L15 19l2.75 1.25L19 23l1.25-2.75L23 19l-2.75-1.25L19 15z"/></svg><div class="r" style="left:468px;top:693.0px;width:47px;height:19px;background:#bdbdbd;border-radius:10px"></div><div class="r" style="left:491.0px;top:689.5px;width:26px;height:26px;background:#237d73;border-radius:50%;box-shadow:0 1px 3px rgba(0,0,0,.3)"></div><div class="r" style="left:21px;top:734.8px;width:498px;height:2px;background:#1f6b63"></div><svg class="r" style="left:33px;top:778.3px;" width="24" height="24" viewBox="0 0 24 24" fill="#333"><path d="M10 17l5-5-5-5v10z"/></svg><svg class="r" style="left:66px;top:773.3px;" width="34" height="34" viewBox="0 0 24 24" fill="#1d5b55"><path d="M10 4H4c-1.1 0-1.99.9-1.99 2L2 18c0 1.1.9 2 2 2h16c1.1 0 2-.9 2-2V8c0-1.1-.9-2-2-2h-8l-2-2z"/></svg><div class="t " style="left:112px;top:791.3px;font-size:18.5px;font-weight:400;color:#444;">Recent</div><svg class="r" style="left:33px;top:843.2px;" width="24" height="24" viewBox="0 0 24 24" fill="#333"><path d="M10 17l5-5-5-5v10z"/></svg><svg class="r" style="left:66px;top:838.2px;" width="34" height="34" viewBox="0 0 24 24" fill="#8a8a8a"><path d="M10 4H4c-1.1 0-1.99.9-1.99 2L2 18c0 1.1.9 2 2 2h16c1.1 0 2-.9 2-2V8c0-1.1-.9-2-2-2h-8l-2-2z"/></svg><div class="t " style="left:112px;top:856.2px;font-size:18.5px;font-weight:400;color:#444;">01. White</div><svg class="r" style="left:33px;top:908.5px;" width="24" height="24" viewBox="0 0 24 24" fill="#333"><path d="M10 17l5-5-5-5v10z"/></svg><svg class="r" style="left:66px;top:903.5px;" width="34" height="34" viewBox="0 0 24 24" fill="#8a8a8a"><path d="M10 4H4c-1.1 0-1.99.9-1.99 2L2 18c0 1.1.9 2 2 2h16c1.1 0 2-.9 2-2V8c0-1.1-.9-2-2-2h-8l-2-2z"/></svg><div class="t " style="left:112px;top:921.5px;font-size:18.5px;font-weight:400;color:#444;">02. Black</div><svg class="r" style="left:70px;top:973px" width="30" height="30" viewBox="0 0 30 30" fill="none" stroke="#333" stroke-width="2.6"><path d="M2 6h8l10 17h8"/><path d="M19 6h9"/></svg><div class="t " style="left:112px;top:986px;font-size:18.4px;font-weight:400;color:#444;">Caro-Kann Defense: Exchange Variation</div><div class="t " style="left:112px;top:1018px;font-size:18.4px;font-weight:400;color:#444;">(B13)</div><div class="r" style="left:64px;top:1044px;width:430px;height:83px;background:#f2f2f2;border:1.5px solid #7fc0b6;border-radius:8px"></div><svg class="r" style="left:70px;top:1062px" width="30" height="30" viewBox="0 0 30 30" fill="none" stroke="#333" stroke-width="2.6"><path d="M2 6h8l10 17h8"/><path d="M19 6h9"/></svg><div class="t " style="left:112px;top:1075px;font-size:18.4px;font-weight:700;color:#333;">Sicilian Defense: Grand Prix Attack</div><div class="t " style="left:112px;top:1107px;font-size:18.4px;font-weight:700;color:#333;">(B23)</div><svg class="r" style="left:459px;top:1062px;" width="25" height="25" viewBox="0 0 24 24" fill="#666"><path d="M19.14 12.94c.04-.3.06-.61.06-.94 0-.32-.02-.64-.07-.94l2.03-1.58c.18-.14.23-.41.12-.61l-1.92-3.32c-.12-.22-.37-.29-.59-.22l-2.39.96c-.5-.38-1.03-.7-1.62-.94l-.36-2.54c-.04-.24-.24-.41-.48-.41h-3.84c-.24 0-.43.17-.47.41l-.36 2.54c-.59.24-1.13.57-1.62.94l-2.39-.96c-.22-.08-.47 0-.59.22L2.74 8.87c-.12.21-.08.47.12.61l2.03 1.58c-.05.3-.09.63-.09.94s.02.64.07.94l-2.03 1.58c-.18.14-.23.41-.12.61l1.92 3.32c.12.22.37.29.59.22l2.39-.96c.5.38 1.03.7 1.62.94l.36 2.54c.05.24.24.41.48.41h3.84c.24 0 .44-.17.47-.41l.36-2.54c.59-.24 1.13-.56 1.62-.94l2.39.96c.22.08.47 0 .59-.22l1.92-3.32c.12-.22.07-.47-.12-.61l-2.01-1.58zM12 15.6c-1.98 0-3.6-1.62-3.6-3.6s1.62-3.6 3.6-3.6 3.6 1.62 3.6 3.6-1.62 3.6-3.6 3.6z"/></svg><div class="card " style="left:551px;top:11px;width:578px;height:939px"></div><div class="brk" style="left:545px;top:5px;width:15px;height:15px;border-left:1px solid #e0e0e0;border-top:1px solid #e0e0e0"></div><div class="brk" style="left:1119px;top:940px;width:15px;height:15px;border-right:1px solid #e0e0e0;border-bottom:1px solid #e0e0e0"></div><svg class="r" style="left:568px;top:38px" width="30" height="30" viewBox="0 0 30 30" fill="none" stroke="#333" stroke-width="2.6"><path d="M2 6h8l10 17h8"/><path d="M19 6h9"/></svg><div class="t " style="left:621px;top:38px;font-size:19.6px;font-weight:700;color:#3b3b3b;">Sicilian Defense: Grand Prix Attack</div><div class="t " style="left:621px;top:70px;font-size:19.6px;font-weight:700;color:#3b3b3b;">(B23) <span style="font-weight:400;color:#777">(878 Moves)</span></div><svg class="r" style="left:1005px;top:29px;" width="30" height="30" viewBox="0 0 24 24" fill="#555"><path d="M12 8c1.1 0 2-.9 2-2s-.9-2-2-2-2 .9-2 2 .9 2 2 2zm0 2c-1.1 0-2 .9-2 2s.9 2 2 2 2-.9 2-2-.9-2-2-2zm0 6c-1.1 0-2 .9-2 2s.9 2 2 2 2-.9 2-2-.9-2-2-2z"/></svg><div class="r" style="left:1062.6px;top:33.5px;width:47px;height:19px;background:#bdbdbd;border-radius:10px"></div><div class="r" style="left:1085.6px;top:30.0px;width:26px;height:26px;background:#237d73;border-radius:50%;box-shadow:0 1px 3px rgba(0,0,0,.3)"></div><div class="r" style="left:561px;top:95.8px;width:558px;height:2px;background:#1f6b63"></div><div class="r" style="left:1100px;top:109px;width:8px;height:604px;background:#dedede"></div><div class="r" style="left:1100px;top:109px;width:8px;height:30px;background:#cacaca"></div><div class="t " style="left:581.8px;top:138.0px;font-size:20px;font-weight:400;color:#444;font-family:'Liberation Mono',monospace">[-]</div><div class="t " style="left:633.8px;top:138.5px;font-size:20px;font-weight:400;color:#444;"><span style="margin-right:13.5px">1.&nbsp;e4</span><span style="margin-right:13.5px">c5</span><span style="margin-right:13.5px">2.&nbsp;<span class="fgw" style="width:23px"><svg width="23" height="23" style="position:absolute;left:0;bottom:-2.8px"><use href="#fn"/></svg></span>c3</span><span style="margin-right:13.5px"><span class="fgw" style="width:23px"><svg width="23" height="23" style="position:absolute;left:0;bottom:-2.8px"><use href="#fn"/></svg></span>c6</span><span style="margin-right:13.5px">3.&nbsp;f4</span><span style="margin-right:13.5px">g6</span></div><div class="t " style="left:608.4px;top:174.67000000000002px;font-size:20px;font-weight:400;color:#42a5f5;font-family:'Liberation Mono',monospace">[-]</div><div class="t " style="left:660.4px;top:175.17000000000002px;font-size:20px;font-weight:400;color:#42a5f5;"><span style="margin-right:13.5px">3<span style="letter-spacing:-1px">...</span>&nbsp;e6</span><span style="margin-right:13.5px">4.&nbsp;<span class="fgw" style="width:23px"><svg width="23" height="23" style="position:absolute;left:0;bottom:-2.8px"><use href="#fn"/></svg></span>f3</span><span style="margin-right:13.5px"><span class="fgw" style="width:23px"><svg width="23" height="23" style="position:absolute;left:0;bottom:-2.8px"><use href="#fn"/></svg></span>h6</span></div><div class="t " style="left:635.0px;top:211.34px;font-size:20px;font-weight:400;color:#4caf50;font-family:'Liberation Mono',monospace">[-]</div><div class="t " style="left:687.0px;top:211.84px;font-size:20px;font-weight:400;color:#4caf50;"><span style="margin-right:13.5px">4<span style="letter-spacing:-1px">...</span>&nbsp;d5</span><span style="margin-right:13.5px">5.&nbsp;<span class="fgw" style="width:23px"><svg width="23" height="23" style="position:absolute;left:0;bottom:-2.8px"><use href="#fb"/></svg></span>b5</span><span style="margin-right:13.5px"><span class="fgw" style="width:23px"><svg width="23" height="23" style="position:absolute;left:0;bottom:-2.8px"><use href="#fn"/></svg></span>e7</span></div><div class="t " style="left:661.5999999999999px;top:248.01px;font-size:20px;font-weight:400;color:#f6b733;font-family:'Liberation Mono',monospace">[-]</div><div class="t " style="left:713.5999999999999px;top:248.51px;font-size:20px;font-weight:400;color:#f6b733;"><span style="margin-right:13.5px">5<span style="letter-spacing:-1px">...</span>&nbsp;<span class="fgw" style="width:23px"><svg width="23" height="23" style="position:absolute;left:0;bottom:-2.8px"><use href="#fn"/></svg></span>f6</span><span style="margin-right:13.5px">6.&nbsp;e5</span><span style="margin-right:13.5px"><span class="fgw" style="width:23px"><svg width="23" height="23" style="position:absolute;left:0;bottom:-2.8px"><use href="#fn"/></svg></span>d7</span></div><div class="t " style="left:688.1999999999999px;top:284.68px;font-size:20px;font-weight:400;color:#f06292;font-family:'Liberation Mono',monospace">[-]</div><div class="t " style="left:740.1999999999999px;top:285.18px;font-size:20px;font-weight:400;color:#f06292;"><span style="margin-right:13.5px">6<span style="letter-spacing:-1px">...</span>&nbsp;<span class="fgw" style="width:23px"><svg width="23" height="23" style="position:absolute;left:0;bottom:-2.8px"><use href="#fn"/></svg></span>g4</span><span style="margin-right:13.5px">7.&nbsp;<span class="fgw" style="width:23px"><svg width="23" height="23" style="position:absolute;left:0;bottom:-2.8px"><use href="#fb"/></svg></span>xc6+</span><span style="margin-right:13.5px">bxc6</span></div><div class="t " style="left:766.8px;top:321.85px;font-size:20px;font-weight:400;color:#ff7043;"><span style="margin-right:13.5px">7<span style="letter-spacing:-1px">...</span>&nbsp;<span class="fgw" style="width:23px"><svg width="23" height="23" style="position:absolute;left:0;bottom:-2.8px"><use href="#fb"/></svg></span>d7</span><span style="margin-right:13.5px">8.&nbsp;<span class="fgw" style="width:23px"><svg width="23" height="23" style="position:absolute;left:0;bottom:-2.8px"><use href="#fb"/></svg></span>xd7+</span></div><div class="t " style="left:766.8px;top:358.52px;font-size:20px;font-weight:400;color:#ff7043;"><span style="margin-right:13.5px">7<span style="letter-spacing:-1px">...</span>&nbsp;<span class="fgw" style="width:23px"><svg width="23" height="23" style="position:absolute;left:0;bottom:-2.8px"><use href="#fk"/></svg></span>e7</span><span style="margin-right:13.5px">8.&nbsp;<span class="fgw" style="width:23px"><svg width="23" height="23" style="position:absolute;left:0;bottom:-2.8px"><use href="#fb"/></svg></span>b5</span></div><div class="t " style="left:740.1999999999999px;top:395.19px;font-size:20px;font-weight:400;color:#f06292;"><span style="margin-right:13.5px">8.&nbsp;d3</span></div><div class="t " style="left:688.1999999999999px;top:431.36px;font-size:20px;font-weight:400;color:#f06292;font-family:'Liberation Mono',monospace">[-]</div><div class="t " style="left:740.1999999999999px;top:431.86px;font-size:20px;font-weight:400;color:#f06292;"><span style="margin-right:13.5px">6<span style="letter-spacing:-1px">...</span>&nbsp;<span class="fgw" style="width:23px"><svg width="23" height="23" style="position:absolute;left:0;bottom:-2.8px"><use href="#fn"/></svg></span>g8</span><span style="margin-right:13.5px">7.&nbsp;<span class="fgw" style="width:23px"><svg width="23" height="23" style="position:absolute;left:0;bottom:-2.8px"><use href="#fb"/></svg></span>xc6+</span><span style="margin-right:13.5px">bxc6</span></div><div class="t " style="left:766.8px;top:468.53000000000003px;font-size:20px;font-weight:400;color:#ff7043;"><span style="margin-right:13.5px">7<span style="letter-spacing:-1px">...</span>&nbsp;<span class="fgw" style="width:23px"><svg width="23" height="23" style="position:absolute;left:0;bottom:-2.8px"><use href="#fk"/></svg></span>e7</span><span style="margin-right:13.5px">8.&nbsp;<span class="fgw" style="width:23px"><svg width="23" height="23" style="position:absolute;left:0;bottom:-2.8px"><use href="#fb"/></svg></span>b5</span></div><div class="t " style="left:766.8px;top:505.20000000000005px;font-size:20px;font-weight:400;color:#ff7043;"><span style="margin-right:13.5px">7<span style="letter-spacing:-1px">...</span>&nbsp;<span class="fgw" style="width:23px"><svg width="23" height="23" style="position:absolute;left:0;bottom:-2.8px"><use href="#fb"/></svg></span>d7</span><span style="margin-right:13.5px">8.&nbsp;<span class="fgw" style="width:23px"><svg width="23" height="23" style="position:absolute;left:0;bottom:-2.8px"><use href="#fb"/></svg></span>xd7+</span></div><div class="t " style="left:740.1999999999999px;top:541.87px;font-size:20px;font-weight:400;color:#f06292;"><span style="margin-right:13.5px">8.&nbsp;d3</span></div><div class="t " style="left:661.5999999999999px;top:578.04px;font-size:20px;font-weight:400;color:#f6b733;font-family:'Liberation Mono',monospace">[-]</div><div class="t " style="left:713.5999999999999px;top:578.54px;font-size:20px;font-weight:400;color:#f6b733;"><span style="margin-right:13.5px">7.&nbsp;O-O</span><span style="margin-right:13.5px"><span class="fgw" style="width:23px"><svg width="23" height="23" style="position:absolute;left:0;bottom:-2.8px"><use href="#fn"/></svg></span>d4</span></div><div class="t " style="left:740.1999999999999px;top:615.21px;font-size:20px;font-weight:400;color:#f06292;"><span style="margin-right:13.5px">7<span style="letter-spacing:-1px">...</span>&nbsp;<span class="fgw" style="width:23px"><svg width="23" height="23" style="position:absolute;left:0;bottom:-2.8px"><use href="#fq"/></svg></span>b6</span><span style="margin-right:13.5px">8.&nbsp;f5</span></div><div class="t " style="left:740.1999999999999px;top:651.88px;font-size:20px;font-weight:400;color:#f06292;"><span style="margin-right:13.5px">7<span style="letter-spacing:-1px">...</span>&nbsp;<span class="fgw" style="width:23px"><svg width="23" height="23" style="position:absolute;left:0;bottom:-2.8px"><use href="#fb"/></svg></span>e7</span><span style="margin-right:13.5px">8.&nbsp;<span class="fgw" style="width:23px"><svg width="23" height="23" style="position:absolute;left:0;bottom:-2.8px"><use href="#fb"/></svg></span>xc6</span></div><div class="t " style="left:713.5999999999999px;top:688.5500000000001px;font-size:20px;font-weight:400;color:#f6b733;"><span style="margin-right:13.5px">8.&nbsp;<span class="fgw" style="width:23px"><svg width="23" height="23" style="position:absolute;left:0;bottom:-2.8px"><use href="#fb"/></svg></span>d3</span></div><div class="r" style="left:572px;top:735px;width:536px;height:1px;background:#dcdcdc"></div><svg class="r" style="left:591.5px;top:763.2px;" width="31" height="31" viewBox="0 0 24 24" fill="#333"><path d="M21.99 4c0-1.1-.89-2-1.99-2H4c-1.1 0-2 .9-2 2v12c0 1.1.9 2 2 2h14l4 4-.01-18zM18 14H6v-2h12v2zm0-3H6V9h12v2zm0-3H6V6h12v2z"/></svg><div class="t tc" style="left:675.5px;top:779px;font-size:23px;font-weight:700;color:#333;">!?</div><svg class="r" style="left:731px;top:765px;" width="28" height="28" viewBox="0 0 24 24" fill="none"><path d="M12 11.55C9.64 9.35 6.48 8 3 8v11c3.48 0 6.64 1.35 9 3.55 2.36-2.19 5.52-3.55 9-3.55V8c-3.48 0-6.64 1.35-9 3.55z" fill="none" stroke="#333" stroke-width="2"/><circle cx="12" cy="5" r="2.5" fill="none" stroke="#333" stroke-width="2"/></svg><svg class="r" style="left:799.4px;top:763.3px;" width="30.6" height="30.6" viewBox="0 0 24 24" fill="#333"><path d="M15.5 14h-.79l-.28-.27C15.41 12.59 16 11.11 16 9.5 16 5.91 13.09 3 9.5 3S3 5.91 3 9.5 5.91 16 9.5 16c1.61 0 3.09-.59 4.23-1.57l.27.28v.79l5 4.99L20.49 19l-4.99-5zm-6 0C7.01 14 5 11.99 5 9.5S7.01 5 9.5 5 14 7.01 14 9.5 11.99 14 9.5 14z"/></svg><svg class="r" style="left:867.3px;top:761.9px;" width="33.2" height="33.2" viewBox="0 0 24 24" fill="none"><g fill="none" stroke="#333" stroke-width="1.8"><circle cx="10.5" cy="10.5" r="7"/><path d="M15.5 15.5L21 21"/><path d="M1.5 11h4.5l2-3 3 6 2-3h5"/></g></svg><svg class="r" style="left:938.5px;top:765px;" width="28" height="28" viewBox="0 0 24 24" fill="#333"><path d="M12 8c1.1 0 2-.9 2-2s-.9-2-2-2-2 .9-2 2 .9 2 2 2zm0 2c-1.1 0-2 .9-2 2s.9 2 2 2 2-.9 2-2-.9-2-2-2zm0 6c-1.1 0-2 .9-2 2s.9 2 2 2 2-.9 2-2-.9-2-2-2z"/></svg><div class="r" style="left:572px;top:808.8px;width:69px;height:2px;background:#237d73"></div><div class="t tc" style="left:840px;top:874px;font-size:21.6px;font-weight:400;color:#777;">Please make a move before adding comments</div><div class="card " style="left:551px;top:971px;width:578px;height:459px"></div><div class="brk" style="left:545px;top:965px;width:15px;height:15px;border-left:1px solid #e0e0e0;border-top:1px solid #e0e0e0"></div><div class="brk" style="left:1119px;top:1420px;width:15px;height:15px;border-right:1px solid #e0e0e0;border-bottom:1px solid #e0e0e0"></div><svg class="r" style="left:566.5px;top:985.5px;" width="32" height="32" viewBox="0 0 24 24" fill="#3b3b3b"><path d="M15 9H9v6h6V9zm-2 4h-2v-2h2v2zm8-2V9h-2V7c0-1.1-.9-2-2-2h-2V3h-2v2h-2V3H9v2H7c-1.1 0-2 .9-2 2v2H3v2h2v2H3v2h2v2c0 1.1.9 2 2 2h2v2h2v-2h2v2h2v-2h2c1.1 0 2-.9 2-2v-2h2v-2h-2v-2h2zm-4 6H7V7h10v10z"/></svg><div class="t " style="left:620.7px;top:1002px;font-size:19.5px;font-weight:700;color:#3b3b3b;">Stockfish On</div><div class="r" style="left:1062px;top:991.9px;width:47px;height:19px;background:#bdbdbd;border-radius:10px"></div><div class="r" style="left:1085.0px;top:988.4px;width:26px;height:26px;background:#237d73;border-radius:50%;box-shadow:0 1px 3px rgba(0,0,0,.3)"></div><div class="r" style="left:561px;top:1031.8px;width:558px;height:2px;background:#1f6b63"></div><div class="t " style="left:572.4px;top:1060.5px;font-size:18.9px;font-weight:700;color:#333;">SF17 NNUE Lite (ST)</div><div class="t " style="left:772.4px;top:1061px;font-size:19px;font-weight:400;color:#555;">20</div><div class="r" style="left:764.5px;top:1076.5px;width:53.5px;height:1px;background-image:linear-gradient(to right,#bbb 50%,transparent 50%);background-size:4px 1px"></div><div class="t " style="left:824.8px;top:1061px;font-size:19px;font-weight:400;color:#444;">for</div><div class="t " style="left:865.5px;top:1061px;font-size:19px;font-weight:400;color:#555;">5</div><div class="r" style="left:854px;top:1076.5px;width:53px;height:1px;background-image:linear-gradient(to right,#bbb 50%,transparent 50%);background-size:4px 1px"></div><div class="t " style="left:913.8px;top:1061px;font-size:19px;font-weight:400;color:#444;">lines.</div><div class="t tc" style="left:612px;top:1107px;font-size:15.5px;font-weight:400;color:#333;">Eval</div><div class="t " style="left:662px;top:1107px;font-size:15.5px;font-weight:400;color:#333;">Win %</div><div class="t " style="left:740px;top:1107px;font-size:15.5px;font-weight:400;color:#333;">Moves</div><div class="r" style="left:572px;top:1123.0px;width:535px;height:1px;background-image:linear-gradient(to right,#cfcfcf 60%,transparent 60%);background-size:5px 1px"></div><div class="r" style="left:572px;top:1166.95px;width:535px;height:1px;background-image:linear-gradient(to right,#cfcfcf 60%,transparent 60%);background-size:5px 1px"></div><div class="r" style="left:572px;top:1210.9px;width:535px;height:1px;background-image:linear-gradient(to right,#cfcfcf 60%,transparent 60%);background-size:5px 1px"></div><div class="r" style="left:572px;top:1254.85px;width:535px;height:1px;background-image:linear-gradient(to right,#cfcfcf 60%,transparent 60%);background-size:5px 1px"></div><div class="r" style="left:572px;top:1298.8px;width:535px;height:1px;background-image:linear-gradient(to right,#cfcfcf 60%,transparent 60%);background-size:5px 1px"></div><div class="r" style="left:572px;top:1342.75px;width:535px;height:1px;background-image:linear-gradient(to right,#cfcfcf 60%,transparent 60%);background-size:5px 1px"></div><div class="t " style="left:574px;top:1143.0px;font-size:19px;font-weight:400;color:#222;">+ 0.47</div><div class="t " style="left:663px;top:1143.0px;font-size:19px;font-weight:400;color:#222;">52.4%</div><div class="t " style="left:740.7px;top:1143.0px;font-size:19px;font-weight:400;color:#222;">1.e4 e5 2.<span class="fgw" style="width:19px"><svg width="19" height="19" style="position:absolute;left:0;bottom:-2.3px"><use href="#fn"/></svg></span>f3 <span class="fgw" style="width:19px"><svg width="19" height="19" style="position:absolute;left:0;bottom:-2.3px"><use href="#fn"/></svg></span>f6 3.d4</div><svg class="r" style="left:1079px;top:1132.0px;" width="26" height="26" viewBox="0 0 24 24" fill="#555"><path d="M16.59 8.59L12 13.17 7.41 8.59 6 10l6 6 6-6z"/></svg><div class="t " style="left:574px;top:1186.95px;font-size:19px;font-weight:400;color:#222;">+ 0.34</div><div class="t " style="left:663px;top:1186.95px;font-size:19px;font-weight:400;color:#222;">51.7%</div><div class="t " style="left:740.7px;top:1186.95px;font-size:19px;font-weight:400;color:#222;">1.d4 d5 2.c4 c6 3.<span class="fgw" style="width:19px"><svg width="19" height="19" style="position:absolute;left:0;bottom:-2.3px"><use href="#fn"/></svg></span>f3</div><svg class="r" style="left:1079px;top:1175.95px;" width="26" height="26" viewBox="0 0 24 24" fill="#555"><path d="M16.59 8.59L12 13.17 7.41 8.59 6 10l6 6 6-6z"/></svg><div class="t " style="left:574px;top:1230.9px;font-size:19px;font-weight:400;color:#222;">+ 0.29</div><div class="t " style="left:663px;top:1230.9px;font-size:19px;font-weight:400;color:#222;">51.5%</div><div class="t " style="left:740.7px;top:1230.9px;font-size:19px;font-weight:400;color:#222;">1.<span class="fgw" style="width:19px"><svg width="19" height="19" style="position:absolute;left:0;bottom:-2.3px"><use href="#fn"/></svg></span>f3 d5 2.d4 c6 3.c4</div><svg class="r" style="left:1079px;top:1219.9px;" width="26" height="26" viewBox="0 0 24 24" fill="#555"><path d="M16.59 8.59L12 13.17 7.41 8.59 6 10l6 6 6-6z"/></svg><div class="t " style="left:574px;top:1274.85px;font-size:19px;font-weight:400;color:#222;">+ 0.23</div><div class="t " style="left:663px;top:1274.85px;font-size:19px;font-weight:400;color:#222;">51.1%</div><div class="t " style="left:740.7px;top:1274.85px;font-size:19px;font-weight:400;color:#222;">1.c4 e5 2.g3 <span class="fgw" style="width:19px"><svg width="19" height="19" style="position:absolute;left:0;bottom:-2.3px"><use href="#fn"/></svg></span>f6 3.<span class="fgw" style="width:19px"><svg width="19" height="19" style="position:absolute;left:0;bottom:-2.3px"><use href="#fb"/></svg></span>g2</div><svg class="r" style="left:1079px;top:1263.85px;" width="26" height="26" viewBox="0 0 24 24" fill="#555"><path d="M16.59 8.59L12 13.17 7.41 8.59 6 10l6 6 6-6z"/></svg><div class="t " style="left:574px;top:1318.8px;font-size:19px;font-weight:400;color:#222;">+ 0.17</div><div class="t " style="left:663px;top:1318.8px;font-size:19px;font-weight:400;color:#222;">50.9%</div><div class="t " style="left:740.7px;top:1318.8px;font-size:19px;font-weight:400;color:#222;">1.e3 d5 2.d4 <span class="fgw" style="width:19px"><svg width="19" height="19" style="position:absolute;left:0;bottom:-2.3px"><use href="#fn"/></svg></span>f6 3.<span class="fgw" style="width:19px"><svg width="19" height="19" style="position:absolute;left:0;bottom:-2.3px"><use href="#fn"/></svg></span>f3</div><svg class="r" style="left:1079px;top:1307.8px;" width="26" height="26" viewBox="0 0 24 24" fill="#555"><path d="M16.59 8.59L12 13.17 7.41 8.59 6 10l6 6 6-6z"/></svg><div class="t " style="left:572px;top:1364px;font-size:16px;font-weight:400;color:#555;">Depth: 20</div><div class="t tr" style="left:1107px;top:1364px;font-size:16px;font-weight:400;color:#555;">Speed: 0.48 Mn/s</div><div class="card " style="left:1151px;top:11px;width:579px;height:459px"></div><div class="brk" style="left:1145px;top:5px;width:15px;height:15px;border-left:1px solid #e0e0e0;border-top:1px solid #e0e0e0"></div><div class="brk" style="left:1720px;top:460px;width:15px;height:15px;border-right:1px solid #e0e0e0;border-bottom:1px solid #e0e0e0"></div><svg class="r" style="left:1164px;top:24px" width="40" height="36" viewBox="0 0 40 36" fill="none" stroke="#111" stroke-width="1.6" stroke-linejoin="round" stroke-linecap="round"><path d="M21.4 7C15 5.5 6.5 10 6.5 18.5C6.5 25 12 30.2 19.4 30.2C22.6 30.2 25.6 28.9 27.5 27.1" stroke-width="1.4"/><path d="M21.4 7L26.6 4.4L26.6 6.5L25.2 8.3L32.4 19.6C32.8 20.5 32.5 21.3 31.8 21.8L28.6 23.8L28.3 24.5" stroke-width="1.9"/><path d="M28.4 24.2C26.5 21.5 24 19.5 21.5 17.5C19 15.5 17.3 13.5 17.3 10.9" stroke-width="1.5"/></svg><div class="t " style="left:1222.2px;top:41.5px;font-size:19.5px;font-weight:700;color:#3b3b3b;">Lichess Database</div><div class="r" style="left:1664px;top:32.0px;width:47px;height:19px;background:#bdbdbd;border-radius:10px"></div><div class="r" style="left:1687.0px;top:28.5px;width:26px;height:26px;background:#237d73;border-radius:50%;box-shadow:0 1px 3px rgba(0,0,0,.3)"></div><div class="r" style="left:1161px;top:72px;width:559px;height:2px;background:#1f6b63"></div><div class="r" style="left:1712px;top:74px;width:8px;height:386px;background:#dedede"></div><div class="r" style="left:1712px;top:74px;width:8px;height:229px;background:#cacaca"></div><div class="clip" style="clip-path:inset(74px 1169px 1096px 1152px)"><div class="t tc" style="left:1218.5px;top:111.3px;font-size:16.2px;font-weight:400;color:#222;">Move</div><div class="t " style="left:1287.5px;top:111.3px;font-size:16.2px;font-weight:400;color:#222;">Games</div><div class="t tc" style="left:1405.0px;top:111.3px;font-size:16.2px;font-weight:400;color:#222;">%</div><div class="t " style="left:1473.8px;top:111.3px;font-size:16.3px;font-weight:400;color:#222;">White / Draw / Black</div><div class="r" style="left:1172.0px;top:127.80000000000001px;width:529.0px;height:1px;background-image:linear-gradient(to right,#cfcfcf 60%,transparent 60%);background-size:5px 1px"></div><div class="r" style="left:1172.0px;top:168.75px;width:529.0px;height:1px;background-image:linear-gradient(to right,#cfcfcf 60%,transparent 60%);background-size:5px 1px"></div><div class="r" style="left:1172.0px;top:209.70000000000002px;width:529.0px;height:1px;background-image:linear-gradient(to right,#cfcfcf 60%,transparent 60%);background-size:5px 1px"></div><div class="r" style="left:1172.0px;top:250.65000000000003px;width:529.0px;height:1px;background-image:linear-gradient(to right,#cfcfcf 60%,transparent 60%);background-size:5px 1px"></div><div class="r" style="left:1172.0px;top:291.6px;width:529.0px;height:1px;background-image:linear-gradient(to right,#cfcfcf 60%,transparent 60%);background-size:5px 1px"></div><div class="r" style="left:1172.0px;top:332.55px;width:529.0px;height:1px;background-image:linear-gradient(to right,#cfcfcf 60%,transparent 60%);background-size:5px 1px"></div><div class="r" style="left:1172.0px;top:373.5px;width:529.0px;height:1px;background-image:linear-gradient(to right,#cfcfcf 60%,transparent 60%);background-size:5px 1px"></div><div class="r" style="left:1172.0px;top:414.45000000000005px;width:529.0px;height:1px;background-image:linear-gradient(to right,#cfcfcf 60%,transparent 60%);background-size:5px 1px"></div><div class="r" style="left:1172.0px;top:455.40000000000003px;width:529.0px;height:1px;background-image:linear-gradient(to right,#cfcfcf 60%,transparent 60%);background-size:5px 1px"></div><div class="r" style="left:1172.0px;top:128.8px;width:93px;height:39.95px;background:#7db8b1"></div><div class="t tc" style="left:1218.5px;top:148.775px;font-size:19px;font-weight:400;color:#333;">e4</div><div class="t " style="left:1287.5px;top:148.775px;font-size:19px;font-weight:400;color:#222;">4.11b</div><div class="t " style="left:1380.0px;top:148.775px;font-size:19px;font-weight:400;color:#222;">58.6%</div><div class="r" style="left:1473.8px;top:136.275px;width:102.6px;height:25px;background:#efefef"></div><div class="r" style="left:1576.3999999999999px;top:136.275px;width:6.155999999999999px;height:25px;background:#9e9e9e"></div><div class="r" style="left:1582.5559999999998px;top:136.275px;width:96.44399999999999px;height:25px;background:#222"></div><div class="t tc" style="left:1525.1px;top:149.275px;font-size:12.5px;font-weight:400;color:#222;">50%</div><div class="t tc" style="left:1630.7779999999998px;top:149.275px;font-size:12.5px;font-weight:700;color:#fff;">47%</div><div class="t tc" style="left:1218.5px;top:189.725px;font-size:19px;font-weight:400;color:#333;">d4</div><div class="t " style="left:1287.5px;top:189.725px;font-size:19px;font-weight:400;color:#222;">1.76b</div><div class="t " style="left:1380.0px;top:189.725px;font-size:19px;font-weight:400;color:#222;">25.1%</div><div class="r" style="left:1473.8px;top:177.225px;width:102.6px;height:25px;background:#efefef"></div><div class="r" style="left:1576.3999999999999px;top:177.225px;width:10.26px;height:25px;background:#9e9e9e"></div><div class="r" style="left:1586.6599999999999px;top:177.225px;width:92.33999999999999px;height:25px;background:#222"></div><div class="t tc" style="left:1525.1px;top:190.225px;font-size:12.5px;font-weight:400;color:#222;">50%</div><div class="t tc" style="left:1632.83px;top:190.225px;font-size:12.5px;font-weight:700;color:#fff;">45%</div><div class="t tc" style="left:1218.5px;top:230.675px;font-size:19px;font-weight:400;color:#333;"><span class="fgw" style="width:22px"><svg width="22" height="22" style="position:absolute;left:0;bottom:-2.7px"><use href="#fn"/></svg></span>f3</div><div class="t " style="left:1287.5px;top:230.675px;font-size:19px;font-weight:400;color:#222;">248.87m</div><div class="t " style="left:1383.1px;top:230.675px;font-size:19px;font-weight:400;color:#222;">3.5%</div><div class="r" style="left:1473.8px;top:218.175px;width:104.65199999999999px;height:25px;background:#efefef"></div><div class="r" style="left:1578.452px;top:218.175px;width:8.208px;height:25px;background:#9e9e9e"></div><div class="r" style="left:1586.66px;top:218.175px;width:92.34px;height:25px;background:#222"></div><div class="t tc" style="left:1526.126px;top:231.175px;font-size:12.5px;font-weight:400;color:#222;">51%</div><div class="t tc" style="left:1632.8300000000002px;top:231.175px;font-size:12.5px;font-weight:700;color:#fff;">45%</div><div class="t tc" style="left:1218.5px;top:271.62500000000006px;font-size:19px;font-weight:400;color:#333;">c4</div><div class="t " style="left:1287.5px;top:271.62500000000006px;font-size:19px;font-weight:400;color:#222;">228.09m</div><div class="t " style="left:1383.1px;top:271.62500000000006px;font-size:19px;font-weight:400;color:#222;">3.2%</div><div class="r" style="left:1473.8px;top:259.12500000000006px;width:104.65199999999999px;height:25px;background:#efefef"></div><div class="r" style="left:1578.452px;top:259.12500000000006px;width:8.208px;height:25px;background:#9e9e9e"></div><div class="r" style="left:1586.66px;top:259.12500000000006px;width:92.34px;height:25px;background:#222"></div><div class="t tc" style="left:1526.126px;top:272.12500000000006px;font-size:12.5px;font-weight:400;color:#222;">51%</div><div class="t tc" style="left:1632.8300000000002px;top:272.12500000000006px;font-size:12.5px;font-weight:700;color:#fff;">45%</div><div class="t tc" style="left:1218.5px;top:312.57500000000005px;font-size:19px;font-weight:400;color:#333;">e3</div><div class="t " style="left:1287.5px;top:312.57500000000005px;font-size:19px;font-weight:400;color:#222;">155.02m</div><div class="t " style="left:1383.1px;top:312.57500000000005px;font-size:19px;font-weight:400;color:#222;">2.2%</div><div class="r" style="left:1473.8px;top:300.07500000000005px;width:98.49599999999998px;height:25px;background:#efefef"></div><div class="r" style="left:1572.2959999999998px;top:300.07500000000005px;width:6.155999999999999px;height:25px;background:#9e9e9e"></div><div class="r" style="left:1578.4519999999998px;top:300.07500000000005px;width:100.548px;height:25px;background:#222"></div><div class="t tc" style="left:1523.048px;top:313.07500000000005px;font-size:12.5px;font-weight:400;color:#222;">48%</div><div class="t tc" style="left:1628.7259999999997px;top:313.07500000000005px;font-size:12.5px;font-weight:700;color:#fff;">49%</div><div class="t tc" style="left:1218.5px;top:353.52500000000003px;font-size:19px;font-weight:400;color:#333;">g3</div><div class="t " style="left:1287.5px;top:353.52500000000003px;font-size:19px;font-weight:400;color:#222;">121.07m</div><div class="t " style="left:1383.1px;top:353.52500000000003px;font-size:19px;font-weight:400;color:#222;">1.7%</div><div class="r" style="left:1473.8px;top:341.02500000000003px;width:102.6px;height:25px;background:#efefef"></div><div class="r" style="left:1576.3999999999999px;top:341.02500000000003px;width:8.208px;height:25px;background:#9e9e9e"></div><div class="r" style="left:1584.608px;top:341.02500000000003px;width:94.392px;height:25px;background:#222"></div><div class="t tc" style="left:1525.1px;top:354.02500000000003px;font-size:12.5px;font-weight:400;color:#222;">50%</div><div class="t tc" style="left:1631.8039999999999px;top:354.02500000000003px;font-size:12.5px;font-weight:700;color:#fff;">46%</div><div class="t tc" style="left:1218.5px;top:394.475px;font-size:19px;font-weight:400;color:#333;">b3</div><div class="t " style="left:1287.5px;top:394.475px;font-size:19px;font-weight:400;color:#222;">109.87m</div><div class="t " style="left:1383.1px;top:394.475px;font-size:19px;font-weight:400;color:#222;">1.6%</div><div class="r" style="left:1473.8px;top:381.975px;width:102.6px;height:25px;background:#efefef"></div><div class="r" style="left:1576.3999999999999px;top:381.975px;width:8.208px;height:25px;background:#9e9e9e"></div><div class="r" style="left:1584.608px;top:381.975px;width:94.392px;height:25px;background:#222"></div><div class="t tc" style="left:1525.1px;top:394.975px;font-size:12.5px;font-weight:400;color:#222;">50%</div><div class="t tc" style="left:1631.8039999999999px;top:394.975px;font-size:12.5px;font-weight:700;color:#fff;">46%</div><div class="t tc" style="left:1218.5px;top:435.42500000000007px;font-size:19px;font-weight:400;color:#333;">d3</div><div class="t " style="left:1287.5px;top:435.42500000000007px;font-size:19px;font-weight:400;color:#222;">65.81m</div><div class="t " style="left:1383.1px;top:435.42500000000007px;font-size:19px;font-weight:400;color:#222;">0.9%</div><div class="r" style="left:1473.8px;top:422.92500000000007px;width:98.49599999999998px;height:25px;background:#efefef"></div><div class="r" style="left:1572.2959999999998px;top:422.92500000000007px;width:8.208px;height:25px;background:#9e9e9e"></div><div class="r" style="left:1580.504px;top:422.92500000000007px;width:98.49600000000001px;height:25px;background:#222"></div><div class="t tc" style="left:1523.048px;top:435.92500000000007px;font-size:12.5px;font-weight:400;color:#222;">48%</div><div class="t tc" style="left:1629.752px;top:435.92500000000007px;font-size:12.5px;font-weight:700;color:#fff;">48%</div></div><div class="card " style="left:1151px;top:491px;width:579px;height:459px"></div><div class="brk" style="left:1145px;top:485px;width:15px;height:15px;border-left:1px solid #e0e0e0;border-top:1px solid #e0e0e0"></div><div class="brk" style="left:1720px;top:940px;width:15px;height:15px;border-right:1px solid #e0e0e0;border-bottom:1px solid #e0e0e0"></div><svg class="r" style="left:1167.5px;top:506.5px;" width="31" height="31" viewBox="0 0 24 24" fill="#333"><path d="M12 3L1 9l4 2.18v6L12 21l7-3.82v-6l2-1.09V17h2V9L12 3zm6.82 6L12 12.72 5.18 9 12 5.28 18.82 9zM17 15.99l-5 2.73-5-2.73v-3.72L12 15l5-2.73v3.72z"/></svg><div class="t " style="left:1222.2px;top:521.5px;font-size:19.5px;font-weight:700;color:#3b3b3b;">Masters Database</div><div class="r" style="left:1664px;top:511.9px;width:47px;height:19px;background:#bdbdbd;border-radius:10px"></div><div class="r" style="left:1687.0px;top:508.4px;width:26px;height:26px;background:#237d73;border-radius:50%;box-shadow:0 1px 3px rgba(0,0,0,.3)"></div><div class="r" style="left:1161px;top:551.8px;width:559px;height:2px;background:#1f6b63"></div><div class="r" style="left:1712px;top:554px;width:8px;height:386px;background:#dedede"></div><div class="r" style="left:1712px;top:554px;width:8px;height:224px;background:#cacaca"></div><div class="t " style="left:1193.4px;top:596.5px;font-size:13.5px;font-weight:700;color:#333;letter-spacing:0.3px">MASTER MOVES</div><div class="t " style="left:1349.3px;top:596.5px;font-size:13.6px;font-weight:400;color:#555;letter-spacing:0.3px">MASTER GAMES</div><div class="r" style="left:1171.7px;top:626.5px;width:155.2px;height:2.5px;background:#237d73"></div><div class="clip" style="clip-path:inset(554px 1169px 617.4px 1152px)"><div class="t tc" style="left:1218.5px;top:655.5px;font-size:16.2px;font-weight:400;color:#222;">Move</div><div class="t " style="left:1287.5px;top:655.5px;font-size:16.2px;font-weight:400;color:#222;">Games</div><div class="t tc" style="left:1405.0px;top:655.5px;font-size:16.2px;font-weight:400;color:#222;">%</div><div class="t " style="left:1473.8px;top:655.5px;font-size:16.3px;font-weight:400;color:#222;">White / Draw / Black</div><div class="r" style="left:1172.0px;top:671.9px;width:529.0px;height:1px;background-image:linear-gradient(to right,#cfcfcf 60%,transparent 60%);background-size:5px 1px"></div><div class="r" style="left:1172.0px;top:712.85px;width:529.0px;height:1px;background-image:linear-gradient(to right,#cfcfcf 60%,transparent 60%);background-size:5px 1px"></div><div class="r" style="left:1172.0px;top:753.8px;width:529.0px;height:1px;background-image:linear-gradient(to right,#cfcfcf 60%,transparent 60%);background-size:5px 1px"></div><div class="r" style="left:1172.0px;top:794.75px;width:529.0px;height:1px;background-image:linear-gradient(to right,#cfcfcf 60%,transparent 60%);background-size:5px 1px"></div><div class="r" style="left:1172.0px;top:835.7px;width:529.0px;height:1px;background-image:linear-gradient(to right,#cfcfcf 60%,transparent 60%);background-size:5px 1px"></div><div class="r" style="left:1172.0px;top:876.65px;width:529.0px;height:1px;background-image:linear-gradient(to right,#cfcfcf 60%,transparent 60%);background-size:5px 1px"></div><div class="r" style="left:1172.0px;top:917.6px;width:529.0px;height:1px;background-image:linear-gradient(to right,#cfcfcf 60%,transparent 60%);background-size:5px 1px"></div><div class="r" style="left:1172.0px;top:958.55px;width:529.0px;height:1px;background-image:linear-gradient(to right,#cfcfcf 60%,transparent 60%);background-size:5px 1px"></div><div class="r" style="left:1172.0px;top:672.9px;width:93px;height:39.95px;background:#7db8b1"></div><div class="t tc" style="left:1218.5px;top:692.875px;font-size:19px;font-weight:400;color:#333;">e4</div><div class="t " style="left:1287.5px;top:692.875px;font-size:19px;font-weight:400;color:#222;">1.23m</div><div class="t " style="left:1380.0px;top:692.875px;font-size:19px;font-weight:400;color:#222;">45.3%</div><div class="r" style="left:1473.8px;top:680.375px;width:65.664px;height:25px;background:#efefef"></div><div class="r" style="left:1539.464px;top:680.375px;width:88.236px;height:25px;background:#9e9e9e"></div><div class="r" style="left:1627.7px;top:680.375px;width:51.3px;height:25px;background:#222"></div><div class="t tc" style="left:1506.632px;top:693.375px;font-size:12.5px;font-weight:400;color:#222;">32%</div><div class="t tc" style="left:1583.5819999999999px;top:693.375px;font-size:12.5px;font-weight:400;color:#222;">43%</div><div class="t tc" style="left:1653.3500000000001px;top:693.375px;font-size:12.5px;font-weight:700;color:#fff;">24%</div><div class="t tc" style="left:1218.5px;top:733.825px;font-size:19px;font-weight:400;color:#333;">d4</div><div class="t " style="left:1287.5px;top:733.825px;font-size:19px;font-weight:400;color:#222;">977,040</div><div class="t " style="left:1380.0px;top:733.825px;font-size:19px;font-weight:400;color:#222;">36.0%</div><div class="r" style="left:1473.8px;top:721.325px;width:67.716px;height:25px;background:#efefef"></div><div class="r" style="left:1541.5159999999998px;top:721.325px;width:90.288px;height:25px;background:#9e9e9e"></div><div class="r" style="left:1631.8039999999999px;top:721.325px;width:47.195999999999984px;height:25px;background:#222"></div><div class="t tc" style="left:1507.658px;top:734.325px;font-size:12.5px;font-weight:400;color:#222;">33%</div><div class="t tc" style="left:1586.6599999999999px;top:734.325px;font-size:12.5px;font-weight:400;color:#222;">44%</div><div class="t tc" style="left:1655.4019999999998px;top:734.325px;font-size:12.5px;font-weight:700;color:#fff;">23%</div><div class="t tc" style="left:1218.5px;top:774.775px;font-size:19px;font-weight:400;color:#333;"><span class="fgw" style="width:22px"><svg width="22" height="22" style="position:absolute;left:0;bottom:-2.7px"><use href="#fn"/></svg></span>f3</div><div class="t " style="left:1287.5px;top:774.775px;font-size:19px;font-weight:400;color:#222;">274,989</div><div class="t " style="left:1380.0px;top:774.775px;font-size:19px;font-weight:400;color:#222;">10.1%</div><div class="r" style="left:1473.8px;top:762.275px;width:69.76799999999999px;height:25px;background:#efefef"></div><div class="r" style="left:1543.568px;top:762.275px;width:90.288px;height:25px;background:#9e9e9e"></div><div class="r" style="left:1633.856px;top:762.275px;width:45.14400000000002px;height:25px;background:#222"></div><div class="t tc" style="left:1508.684px;top:775.275px;font-size:12.5px;font-weight:400;color:#222;">34%</div><div class="t tc" style="left:1588.712px;top:775.275px;font-size:12.5px;font-weight:400;color:#222;">44%</div><div class="t tc" style="left:1656.428px;top:775.275px;font-size:12.5px;font-weight:700;color:#fff;">22%</div><div class="t tc" style="left:1218.5px;top:815.725px;font-size:19px;font-weight:400;color:#333;">c4</div><div class="t " style="left:1287.5px;top:815.725px;font-size:19px;font-weight:400;color:#222;">187,790</div><div class="t " style="left:1383.1px;top:815.725px;font-size:19px;font-weight:400;color:#222;">6.9%</div><div class="r" style="left:1473.8px;top:803.225px;width:69.76799999999999px;height:25px;background:#efefef"></div><div class="r" style="left:1543.568px;top:803.225px;width:88.236px;height:25px;background:#9e9e9e"></div><div class="r" style="left:1631.804px;top:803.225px;width:47.19600000000001px;height:25px;background:#222"></div><div class="t tc" style="left:1508.684px;top:816.225px;font-size:12.5px;font-weight:400;color:#222;">34%</div><div class="t tc" style="left:1587.686px;top:816.225px;font-size:12.5px;font-weight:400;color:#222;">43%</div><div class="t tc" style="left:1655.402px;top:816.225px;font-size:12.5px;font-weight:700;color:#fff;">23%</div><div class="t tc" style="left:1218.5px;top:856.6750000000001px;font-size:19px;font-weight:400;color:#333;">g3</div><div class="t " style="left:1287.5px;top:856.6750000000001px;font-size:19px;font-weight:400;color:#222;">19,809</div><div class="t " style="left:1383.1px;top:856.6750000000001px;font-size:19px;font-weight:400;color:#222;">0.7%</div><div class="r" style="left:1473.8px;top:844.1750000000001px;width:73.872px;height:25px;background:#efefef"></div><div class="r" style="left:1547.672px;top:844.1750000000001px;width:80.02799999999999px;height:25px;background:#9e9e9e"></div><div class="r" style="left:1627.7px;top:844.1750000000001px;width:51.29999999999998px;height:25px;background:#222"></div><div class="t tc" style="left:1510.7359999999999px;top:857.1750000000001px;font-size:12.5px;font-weight:400;color:#222;">36%</div><div class="t tc" style="left:1587.686px;top:857.1750000000001px;font-size:12.5px;font-weight:400;color:#222;">39%</div><div class="t tc" style="left:1653.3500000000001px;top:857.1750000000001px;font-size:12.5px;font-weight:700;color:#fff;">25%</div><div class="t tc" style="left:1218.5px;top:897.625px;font-size:19px;font-weight:400;color:#333;">b3</div><div class="t " style="left:1287.5px;top:897.625px;font-size:19px;font-weight:400;color:#222;">10,718</div><div class="t " style="left:1383.1px;top:897.625px;font-size:19px;font-weight:400;color:#222;">0.4%</div><div class="r" style="left:1473.8px;top:885.125px;width:67.716px;height:25px;background:#efefef"></div><div class="r" style="left:1541.5159999999998px;top:885.125px;width:75.92399999999999px;height:25px;background:#9e9e9e"></div><div class="r" style="left:1617.4399999999998px;top:885.125px;width:61.55999999999999px;height:25px;background:#222"></div><div class="t tc" style="left:1507.658px;top:898.125px;font-size:12.5px;font-weight:400;color:#222;">33%</div><div class="t tc" style="left:1579.4779999999998px;top:898.125px;font-size:12.5px;font-weight:400;color:#222;">37%</div><div class="t tc" style="left:1648.2199999999998px;top:898.125px;font-size:12.5px;font-weight:700;color:#fff;">30%</div><div class="t tc" style="left:1218.5px;top:938.575px;font-size:19px;font-weight:400;color:#333;">f4</div><div class="t " style="left:1287.5px;top:938.575px;font-size:19px;font-weight:400;color:#222;">6,395</div><div class="t " style="left:1383.1px;top:938.575px;font-size:19px;font-weight:400;color:#222;">0.2%</div><div class="r" style="left:1473.8px;top:926.075px;width:59.507999999999996px;height:25px;background:#efefef"></div><div class="r" style="left:1533.308px;top:926.075px;width:73.872px;height:25px;background:#9e9e9e"></div><div class="r" style="left:1607.18px;top:926.075px;width:71.82000000000001px;height:25px;background:#222"></div><div class="t tc" style="left:1503.5539999999999px;top:939.075px;font-size:12.5px;font-weight:400;color:#222;">29%</div><div class="t tc" style="left:1570.244px;top:939.075px;font-size:12.5px;font-weight:400;color:#222;">36%</div><div class="t tc" style="left:1643.0900000000001px;top:939.075px;font-size:12.5px;font-weight:700;color:#fff;">35%</div></div><div class="card " style="left:1151px;top:971px;width:579px;height:459px"></div><div class="brk" style="left:1145px;top:965px;width:15px;height:15px;border-left:1px solid #e0e0e0;border-top:1px solid #e0e0e0"></div><div class="brk" style="left:1720px;top:1420px;width:15px;height:15px;border-right:1px solid #e0e0e0;border-bottom:1px solid #e0e0e0"></div><svg class="r" style="left:1166.8px;top:986px;" width="32.4" height="32.4" viewBox="0 0 24 24" fill="#3b3b3b"><path d="M19.93 8.35l-3.6 1.68L14 7.7V6.3l2.33-2.33 3.6 1.68c.38.18.82.01 1-.36.18-.38.01-.82-.36-1l-3.92-1.83c-.38-.18-.83-.1-1.13.2L13.78 4.4c-.18-.24-.46-.4-.78-.4-.55 0-1 .45-1 1v1H8.82C8.4 4.84 7.3 4 6 4 4.34 4 3 5.34 3 7c0 1.1.6 2.05 1.48 2.58L7.08 18H4v3h13v-3h-3.62L8.41 8.77c.17-.24.31-.49.41-.77H12v1c0 .55.45 1 1 1 .32 0 .6-.16.78-.4l1.74 1.74c.3.3.75.38 1.13.2l3.92-1.83c.38-.18.54-.62.36-1-.18-.37-.62-.54-1-.36zM6 8c-.55 0-1-.45-1-1s.45-1 1-1 1 .45 1 1-.45 1-1 1z"/></svg><div class="t " style="left:1222.2px;top:1001.5px;font-size:19.5px;font-weight:700;color:#3b3b3b;">TCEC Database</div><div class="r" style="left:1664px;top:991.9px;width:47px;height:19px;background:#bdbdbd;border-radius:10px"></div><div class="r" style="left:1687.0px;top:988.4px;width:26px;height:26px;background:#237d73;border-radius:50%;box-shadow:0 1px 3px rgba(0,0,0,.3)"></div><div class="r" style="left:1161px;top:1031.8px;width:559px;height:2px;background:#1f6b63"></div><div class="r" style="left:1712px;top:1034px;width:8px;height:386px;background:#dedede"></div><div class="r" style="left:1712px;top:1034px;width:8px;height:150px;background:#cacaca"></div><div class="t " style="left:1193.4px;top:1076.5px;font-size:13.5px;font-weight:700;color:#333;letter-spacing:0.3px">TCEC MOVES</div><div class="t " style="left:1328.3px;top:1076.5px;font-size:13.6px;font-weight:400;color:#555;letter-spacing:0.3px">TCEC GAMES</div><div class="r" style="left:1171.7px;top:1106.5px;width:135.2px;height:2.5px;background:#237d73"></div><div class="clip" style="clip-path:inset(1034px 1169px 137.4000000000001px 1152px)"><div class="t tc" style="left:1218.5px;top:1135.5px;font-size:16.2px;font-weight:400;color:#222;">Move</div><div class="t " style="left:1287.5px;top:1135.5px;font-size:16.2px;font-weight:400;color:#222;">Games</div><div class="t tc" style="left:1405.0px;top:1135.5px;font-size:16.2px;font-weight:400;color:#222;">%</div><div class="t " style="left:1473.8px;top:1135.5px;font-size:16.3px;font-weight:400;color:#222;">White / Draw / Black</div><div class="r" style="left:1172.0px;top:1151.9px;width:529.0px;height:1px;background-image:linear-gradient(to right,#cfcfcf 60%,transparent 60%);background-size:5px 1px"></div><div class="r" style="left:1172.0px;top:1192.8500000000001px;width:529.0px;height:1px;background-image:linear-gradient(to right,#cfcfcf 60%,transparent 60%);background-size:5px 1px"></div><div class="r" style="left:1172.0px;top:1233.8000000000002px;width:529.0px;height:1px;background-image:linear-gradient(to right,#cfcfcf 60%,transparent 60%);background-size:5px 1px"></div><div class="r" style="left:1172.0px;top:1274.75px;width:529.0px;height:1px;background-image:linear-gradient(to right,#cfcfcf 60%,transparent 60%);background-size:5px 1px"></div><div class="r" style="left:1172.0px;top:1315.7px;width:529.0px;height:1px;background-image:linear-gradient(to right,#cfcfcf 60%,transparent 60%);background-size:5px 1px"></div><div class="r" style="left:1172.0px;top:1356.65px;width:529.0px;height:1px;background-image:linear-gradient(to right,#cfcfcf 60%,transparent 60%);background-size:5px 1px"></div><div class="r" style="left:1172.0px;top:1397.6000000000001px;width:529.0px;height:1px;background-image:linear-gradient(to right,#cfcfcf 60%,transparent 60%);background-size:5px 1px"></div><div class="r" style="left:1172.0px;top:1438.5500000000002px;width:529.0px;height:1px;background-image:linear-gradient(to right,#cfcfcf 60%,transparent 60%);background-size:5px 1px"></div><div class="r" style="left:1172.0px;top:1152.9px;width:93px;height:39.95px;background:#7db8b1"></div><div class="t tc" style="left:1218.5px;top:1172.875px;font-size:19px;font-weight:400;color:#333;">e4</div><div class="t " style="left:1287.5px;top:1172.875px;font-size:19px;font-weight:400;color:#222;">23,025</div><div class="t " style="left:1380.0px;top:1172.875px;font-size:19px;font-weight:400;color:#222;">47.4%</div><div class="r" style="left:1473.8px;top:1160.375px;width:69.76799999999999px;height:25px;background:#efefef"></div><div class="r" style="left:1543.568px;top:1160.375px;width:112.86px;height:25px;background:#9e9e9e"></div><div class="r" style="left:1656.4279999999999px;top:1160.375px;width:22.572000000000017px;height:25px;background:#222"></div><div class="t tc" style="left:1508.684px;top:1173.375px;font-size:12.5px;font-weight:400;color:#222;">34%</div><div class="t tc" style="left:1599.998px;top:1173.375px;font-size:12.5px;font-weight:400;color:#222;">55%</div><div class="t tc" style="left:1667.714px;top:1173.375px;font-size:12.5px;font-weight:700;color:#fff;">11%</div><div class="t tc" style="left:1218.5px;top:1213.825px;font-size:19px;font-weight:400;color:#333;">d4</div><div class="t " style="left:1287.5px;top:1213.825px;font-size:19px;font-weight:400;color:#222;">17,485</div><div class="t " style="left:1380.0px;top:1213.825px;font-size:19px;font-weight:400;color:#222;">36.0%</div><div class="r" style="left:1473.8px;top:1201.325px;width:69.76799999999999px;height:25px;background:#efefef"></div><div class="r" style="left:1543.568px;top:1201.325px;width:114.91199999999999px;height:25px;background:#9e9e9e"></div><div class="r" style="left:1658.48px;top:1201.325px;width:20.520000000000024px;height:25px;background:#222"></div><div class="t tc" style="left:1508.684px;top:1214.325px;font-size:12.5px;font-weight:400;color:#222;">34%</div><div class="t tc" style="left:1601.024px;top:1214.325px;font-size:12.5px;font-weight:400;color:#222;">56%</div><div class="t tc" style="left:1668.74px;top:1214.325px;font-size:12.5px;font-weight:700;color:#fff;">11%</div><div class="t tc" style="left:1218.5px;top:1254.775px;font-size:19px;font-weight:400;color:#333;">c4</div><div class="t " style="left:1287.5px;top:1254.775px;font-size:19px;font-weight:400;color:#222;">3,032</div><div class="t " style="left:1383.1px;top:1254.775px;font-size:19px;font-weight:400;color:#222;">6.2%</div><div class="r" style="left:1473.8px;top:1242.275px;width:59.507999999999996px;height:25px;background:#efefef"></div><div class="r" style="left:1533.308px;top:1242.275px;width:114.91199999999999px;height:25px;background:#9e9e9e"></div><div class="r" style="left:1648.22px;top:1242.275px;width:30.780000000000015px;height:25px;background:#222"></div><div class="t tc" style="left:1503.5539999999999px;top:1255.275px;font-size:12.5px;font-weight:400;color:#222;">29%</div><div class="t tc" style="left:1590.764px;top:1255.275px;font-size:12.5px;font-weight:400;color:#222;">56%</div><div class="t tc" style="left:1663.6100000000001px;top:1255.275px;font-size:12.5px;font-weight:700;color:#fff;">15%</div><div class="t tc" style="left:1218.5px;top:1295.725px;font-size:19px;font-weight:400;color:#333;"><span class="fgw" style="width:22px"><svg width="22" height="22" style="position:absolute;left:0;bottom:-2.7px"><use href="#fn"/></svg></span>f3</div><div class="t " style="left:1287.5px;top:1295.725px;font-size:19px;font-weight:400;color:#222;">2,755</div><div class="t " style="left:1383.1px;top:1295.725px;font-size:19px;font-weight:400;color:#222;">5.7%</div><div class="r" style="left:1473.8px;top:1283.225px;width:63.611999999999995px;height:25px;background:#efefef"></div><div class="r" style="left:1537.412px;top:1283.225px;width:108.75599999999999px;height:25px;background:#9e9e9e"></div><div class="r" style="left:1646.1680000000001px;top:1283.225px;width:32.83200000000001px;height:25px;background:#222"></div><div class="t tc" style="left:1505.606px;top:1296.225px;font-size:12.5px;font-weight:400;color:#222;">31%</div><div class="t tc" style="left:1591.79px;top:1296.225px;font-size:12.5px;font-weight:400;color:#222;">53%</div><div class="t tc" style="left:1662.584px;top:1296.225px;font-size:12.5px;font-weight:700;color:#fff;">16%</div><div class="t tc" style="left:1218.5px;top:1336.675px;font-size:19px;font-weight:400;color:#333;">b3</div><div class="t " style="left:1296.0px;top:1336.675px;font-size:19px;font-weight:400;color:#222;">403</div><div class="t " style="left:1383.1px;top:1336.675px;font-size:19px;font-weight:400;color:#222;">0.8%</div><div class="r" style="left:1473.8px;top:1324.175px;width:51.3px;height:25px;background:#efefef"></div><div class="r" style="left:1525.1px;top:1324.175px;width:112.86px;height:25px;background:#9e9e9e"></div><div class="r" style="left:1637.9599999999998px;top:1324.175px;width:41.03999999999998px;height:25px;background:#222"></div><div class="t tc" style="left:1499.45px;top:1337.175px;font-size:12.5px;font-weight:400;color:#222;">25%</div><div class="t tc" style="left:1581.53px;top:1337.175px;font-size:12.5px;font-weight:400;color:#222;">55%</div><div class="t tc" style="left:1658.4799999999998px;top:1337.175px;font-size:12.5px;font-weight:700;color:#fff;">20%</div><div class="t tc" style="left:1218.5px;top:1377.625px;font-size:19px;font-weight:400;color:#333;">g3</div><div class="t " style="left:1296.0px;top:1377.625px;font-size:19px;font-weight:400;color:#222;">402</div><div class="t " style="left:1383.1px;top:1377.625px;font-size:19px;font-weight:400;color:#222;">0.8%</div><div class="r" style="left:1473.8px;top:1365.125px;width:53.352px;height:25px;background:#efefef"></div><div class="r" style="left:1527.152px;top:1365.125px;width:127.22399999999999px;height:25px;background:#9e9e9e"></div><div class="r" style="left:1654.376px;top:1365.125px;width:24.623999999999995px;height:25px;background:#222"></div><div class="t tc" style="left:1500.4759999999999px;top:1378.125px;font-size:12.5px;font-weight:400;color:#222;">26%</div><div class="t tc" style="left:1590.7640000000001px;top:1378.125px;font-size:12.5px;font-weight:400;color:#222;">62%</div><div class="t tc" style="left:1666.6879999999999px;top:1378.125px;font-size:12.5px;font-weight:700;color:#fff;">12%</div><div class="t tc" style="left:1218.5px;top:1418.575px;font-size:19px;font-weight:400;color:#333;">f4</div><div class="t " style="left:1296.0px;top:1418.575px;font-size:19px;font-weight:400;color:#222;">345</div><div class="t " style="left:1383.1px;top:1418.575px;font-size:19px;font-weight:400;color:#222;">0.7%</div><div class="r" style="left:1473.8px;top:1406.075px;width:49.24799999999999px;height:25px;background:#efefef"></div><div class="r" style="left:1523.048px;top:1406.075px;width:110.80799999999999px;height:25px;background:#9e9e9e"></div><div class="r" style="left:1633.856px;top:1406.075px;width:45.144000000000005px;height:25px;background:#222"></div><div class="t tc" style="left:1498.424px;top:1419.075px;font-size:12.5px;font-weight:400;color:#222;">24%</div><div class="t tc" style="left:1578.452px;top:1419.075px;font-size:12.5px;font-weight:400;color:#222;">54%</div><div class="t tc" style="left:1656.4279999999999px;top:1419.075px;font-size:12.5px;font-weight:700;color:#fff;">22%</div></div><div class="card " style="left:1752px;top:11px;width:578px;height:459px"></div><div class="brk" style="left:1746px;top:5px;width:15px;height:15px;border-left:1px solid #e0e0e0;border-top:1px solid #e0e0e0"></div><div class="brk" style="left:2320px;top:460px;width:15px;height:15px;border-right:1px solid #e0e0e0;border-bottom:1px solid #e0e0e0"></div><svg class="r" style="left:1768.5px;top:25.5px;" width="32" height="32" viewBox="0 0 24 24" fill="#333"><path d="M17 12h2L12 2 5.05 12H7l-3.9 6h6.92v4h3.95v-4H21l-4-6zM6.79 16l3.9-6H8.88l3.13-4.5 3.15 4.5h-1.9l4 6H6.79z"/></svg><div class="t " style="left:1821.7px;top:41.5px;font-size:19.5px;font-weight:700;color:#3b3b3b;">My Reference Tree</div><div class="r" style="left:2264px;top:32.0px;width:47px;height:19px;background:#bdbdbd;border-radius:10px"></div><div class="r" style="left:2287.0px;top:28.5px;width:26px;height:26px;background:#237d73;border-radius:50%;box-shadow:0 1px 3px rgba(0,0,0,.3)"></div><div class="r" style="left:1762px;top:72px;width:558px;height:2px;background:#1f6b63"></div><div class="r" style="left:1773px;top:96px;width:144px;height:41px;background:#fff;border-radius:6px;box-shadow:0 2px 3px rgba(0,0,0,.3),0 0 2px rgba(0,0,0,.1)"></div><div class="r" style="left:1773px;top:96px;width:72px;height:41px;background:#237d73;border-radius:6px 0 0 6px"></div><div class="t tc" style="left:1809px;top:116.3px;font-size:17px;font-weight:700;color:#fff;">White</div><div class="t tc" style="left:1880.5px;top:116.3px;font-size:17.5px;font-weight:400;color:#222;">Black</div><div class="t tc" style="left:1819px;top:173.5px;font-size:16px;font-weight:400;color:#222;">Move</div><div class="t tc" style="left:1913px;top:173.5px;font-size:16px;font-weight:400;color:#222;">Games</div><div class="t tc" style="left:2005.5px;top:173.5px;font-size:16px;font-weight:400;color:#222;">%</div><div class="t " style="left:2073.8px;top:173.5px;font-size:16px;font-weight:400;color:#222;">White / Draw / Black</div><div class="r" style="left:1773px;top:189.5px;width:536px;height:1px;background-image:linear-gradient(to right,#cfcfcf 60%,transparent 60%);background-size:5px 1px"></div><div class="r" style="left:1773px;top:230.5px;width:536px;height:1px;background-image:linear-gradient(to right,#cfcfcf 60%,transparent 60%);background-size:5px 1px"></div><div class="r" style="left:1773px;top:271.5px;width:536px;height:1px;background-image:linear-gradient(to right,#cfcfcf 60%,transparent 60%);background-size:5px 1px"></div><div class="r" style="left:1773px;top:312.5px;width:536px;height:1px;background-image:linear-gradient(to right,#cfcfcf 60%,transparent 60%);background-size:5px 1px"></div><div class="r" style="left:1773px;top:353.5px;width:536px;height:1px;background-image:linear-gradient(to right,#cfcfcf 60%,transparent 60%);background-size:5px 1px"></div><div class="r" style="left:1773px;top:190.5px;width:93px;height:40px;background:#7db8b1"></div><div class="t tc" style="left:1819px;top:210.5px;font-size:19px;font-weight:400;color:#333;">e4</div><div class="t tc" style="left:1913px;top:210.5px;font-size:19px;font-weight:400;color:#222;">497</div><div class="t tc" style="left:2005.5px;top:210.5px;font-size:19px;font-weight:400;color:#222;">99.6%</div><div class="r" style="left:2073.8px;top:198.0px;width:106.6px;height:25px;background:#efefef"></div><div class="r" style="left:2180.4px;top:198.0px;width:12.791999999999998px;height:25px;background:#9e9e9e"></div><div class="r" style="left:2193.192px;top:198.0px;width:93.80799999999999px;height:25px;background:#222"></div><div class="t tc" style="left:2127.1000000000004px;top:211.0px;font-size:12.5px;font-weight:400;color:#222;">50%</div><div class="t tc" style="left:2240.096px;top:211.0px;font-size:12.5px;font-weight:700;color:#fff;">44%</div><div class="t tc" style="left:1819px;top:251.5px;font-size:19px;font-weight:400;color:#333;">d4</div><div class="t tc" style="left:1913px;top:251.5px;font-size:19px;font-weight:400;color:#222;">1</div><div class="t tc" style="left:2005.5px;top:251.5px;font-size:19px;font-weight:400;color:#222;">0.2%</div><div class="r" style="left:2073.8px;top:239.0px;width:213.2px;height:25px;background:#efefef"></div><div class="r" style="left:2287.0px;top:239.0px;width:0.0px;height:25px;background:#9e9e9e"></div><div class="r" style="left:2287.0px;top:239.0px;width:0.0px;height:25px;background:#222"></div><div class="t tc" style="left:2180.4px;top:252.0px;font-size:12.5px;font-weight:400;color:#222;">100%</div><div class="t tc" style="left:1819px;top:292.5px;font-size:19px;font-weight:400;color:#333;">e3</div><div class="t tc" style="left:1913px;top:292.5px;font-size:19px;font-weight:400;color:#222;">1</div><div class="t tc" style="left:2005.5px;top:292.5px;font-size:19px;font-weight:400;color:#222;">0.2%</div><div class="r" style="left:2073.8px;top:280.0px;width:213.2px;height:25px;background:#efefef"></div><div class="r" style="left:2287.0px;top:280.0px;width:0.0px;height:25px;background:#9e9e9e"></div><div class="r" style="left:2287.0px;top:280.0px;width:0.0px;height:25px;background:#222"></div><div class="t tc" style="left:2180.4px;top:293.0px;font-size:12.5px;font-weight:400;color:#222;">100%</div><div class="t tc" style="left:1819px;top:333.5px;font-size:19px;font-weight:700;color:#222;">All</div><div class="t tc" style="left:1913px;top:333.5px;font-size:19px;font-weight:700;color:#222;">499</div><div class="t tc" style="left:2010.5px;top:333.5px;font-size:19px;font-weight:700;color:#222;">100.0%</div><div class="r" style="left:2073.8px;top:321.0px;width:108.73199999999999px;height:25px;background:#efefef"></div><div class="r" style="left:2182.532px;top:321.0px;width:10.66px;height:25px;background:#9e9e9e"></div><div class="r" style="left:2193.192px;top:321.0px;width:93.808px;height:25px;background:#222"></div><div class="t tc" style="left:2128.166px;top:334.0px;font-size:12.5px;font-weight:400;color:#222;">51%</div><div class="t tc" style="left:2240.096px;top:334.0px;font-size:12.5px;font-weight:700;color:#fff;">44%</div><div class="card " style="left:1752px;top:491px;width:578px;height:459px"></div><div class="brk" style="left:1746px;top:485px;width:15px;height:15px;border-left:1px solid #e0e0e0;border-top:1px solid #e0e0e0"></div><div class="brk" style="left:2320px;top:940px;width:15px;height:15px;border-right:1px solid #e0e0e0;border-bottom:1px solid #e0e0e0"></div><svg class="r" style="left:1767px;top:504px" width="35" height="35" viewBox="0 0 35 35" fill="none" stroke="#333" stroke-width="1.15"><circle cx="17.5" cy="17.5" r="16.2" stroke-width="1.3"/><path d="M13 7.2V26.8M9 7.8V13.5H13M13 18.5C12 22 10 24.5 7.5 25.8M7 18.3H27M20 7.2C18.5 9.5 17 11.5 15 13M18.3 9H25.8C23 12.5 20 14.5 16.5 16M17.8 11.3L21.2 14.2M23.4 15.5V26.3C23.4 26.8 23 27 22.5 27H20M16.5 20.8L19.3 23.8"/></svg><div class="t " style="left:1822.8px;top:521.5px;font-size:19.5px;font-weight:700;color:#3b3b3b;">ChessDB</div><div class="r" style="left:2264px;top:511.9px;width:47px;height:19px;background:#bdbdbd;border-radius:10px"></div><div class="r" style="left:2287.0px;top:508.4px;width:26px;height:26px;background:#237d73;border-radius:50%;box-shadow:0 1px 3px rgba(0,0,0,.3)"></div><div class="r" style="left:1762px;top:551.8px;width:558px;height:2px;background:#1f6b63"></div><div class="r" style="left:2312px;top:554px;width:8px;height:386px;background:#dedede"></div><div class="r" style="left:2312px;top:554px;width:8px;height:174px;background:#cacaca"></div><div class="clip" style="clip-path:inset(554px 569px 617.4px 1753px)"><div class="t tc" style="left:1821.7px;top:591.5px;font-size:16px;font-weight:400;color:#222;">Move</div><div class="t tc" style="left:1926px;top:591.5px;font-size:16px;font-weight:400;color:#222;">Score</div><div class="t tc" style="left:2046px;top:591.5px;font-size:16px;font-weight:400;color:#222;">Win %</div><div class="t tc" style="left:2160px;top:591.5px;font-size:16px;font-weight:400;color:#222;">Rank</div><div class="t tc" style="left:2254.5px;top:591.5px;font-size:16px;font-weight:400;color:#222;">Note</div><div class="r" style="left:1773px;top:607.8px;width:528px;height:1px;background-image:linear-gradient(to right,#cfcfcf 60%,transparent 60%);background-size:5px 1px"></div><div class="r" style="left:1773px;top:648px;width:98.7px;height:38.5px;background:#7db8b1"></div><div class="r" style="left:1773px;top:647.1px;width:528px;height:1px;background:#e0e0e0"></div><div class="r" style="left:1773px;top:686.1px;width:528px;height:1px;background:#e0e0e0"></div><div class="r" style="left:1773px;top:725.1px;width:528px;height:1px;background:#e0e0e0"></div><div class="r" style="left:1773px;top:764.1px;width:528px;height:1px;background:#e0e0e0"></div><div class="r" style="left:1773px;top:803.1px;width:528px;height:1px;background:#e0e0e0"></div><div class="r" style="left:1773px;top:842.1px;width:528px;height:1px;background:#e0e0e0"></div><div class="r" style="left:1773px;top:881.1px;width:528px;height:1px;background:#e0e0e0"></div><div class="r" style="left:1773px;top:920.1px;width:528px;height:1px;background:#e0e0e0"></div><div class="t tc" style="left:1821.7px;top:628px;font-size:19px;font-weight:400;color:#333;">d4</div><div class="t tc" style="left:1926px;top:628px;font-size:19px;font-weight:400;color:#222;">+0.01</div><div class="t tc" style="left:2046px;top:628px;font-size:19px;font-weight:400;color:#222;">50.08%</div><div class="t tc" style="left:2160px;top:628px;font-size:19px;font-weight:400;color:#222;">2</div><div class="t tc" style="left:2254.5px;top:628px;font-size:19px;font-weight:400;color:#222;">!</div><div class="t tc" style="left:1821.7px;top:667px;font-size:19px;font-weight:400;color:#333;">e4</div><div class="t tc" style="left:1926px;top:667px;font-size:19px;font-weight:400;color:#222;">+0.01</div><div class="t tc" style="left:2046px;top:667px;font-size:19px;font-weight:400;color:#222;">50.08%</div><div class="t tc" style="left:2160px;top:667px;font-size:19px;font-weight:400;color:#222;">2</div><div class="t tc" style="left:2254.5px;top:667px;font-size:19px;font-weight:400;color:#222;">!</div><div class="t tc" style="left:1821.7px;top:706px;font-size:19px;font-weight:400;color:#333;"><span class="fgw" style="width:22px"><svg width="22" height="22" style="position:absolute;left:0;bottom:-2.7px"><use href="#fn"/></svg></span>f3</div><div class="t tc" style="left:1926px;top:706px;font-size:19px;font-weight:400;color:#222;">+0.01</div><div class="t tc" style="left:2046px;top:706px;font-size:19px;font-weight:400;color:#222;">50.08%</div><div class="t tc" style="left:2160px;top:706px;font-size:19px;font-weight:400;color:#222;">2</div><div class="t tc" style="left:2254.5px;top:706px;font-size:19px;font-weight:400;color:#222;">!</div><div class="t tc" style="left:1821.7px;top:745px;font-size:19px;font-weight:400;color:#333;">c4</div><div class="t tc" style="left:1926px;top:745px;font-size:19px;font-weight:400;color:#222;">+0.01</div><div class="t tc" style="left:2046px;top:745px;font-size:19px;font-weight:400;color:#222;">50.08%</div><div class="t tc" style="left:2160px;top:745px;font-size:19px;font-weight:400;color:#222;">2</div><div class="t tc" style="left:2254.5px;top:745px;font-size:19px;font-weight:400;color:#222;">!</div><div class="t tc" style="left:1821.7px;top:784px;font-size:19px;font-weight:400;color:#333;"><span class="fgw" style="width:22px"><svg width="22" height="22" style="position:absolute;left:0;bottom:-2.7px"><use href="#fn"/></svg></span>c3</div><div class="t tc" style="left:1926px;top:784px;font-size:19px;font-weight:400;color:#222;">0.00</div><div class="t tc" style="left:2046px;top:784px;font-size:19px;font-weight:400;color:#222;">50.00%</div><div class="t tc" style="left:2160px;top:784px;font-size:19px;font-weight:400;color:#222;">2</div><div class="t tc" style="left:2254.5px;top:784px;font-size:19px;font-weight:400;color:#222;">!</div><div class="t tc" style="left:1821.7px;top:823px;font-size:19px;font-weight:400;color:#333;">a3</div><div class="t tc" style="left:1926px;top:823px;font-size:19px;font-weight:400;color:#222;">0.00</div><div class="t tc" style="left:2046px;top:823px;font-size:19px;font-weight:400;color:#222;">50.00%</div><div class="t tc" style="left:2160px;top:823px;font-size:19px;font-weight:400;color:#222;">2</div><div class="t tc" style="left:2254.5px;top:823px;font-size:19px;font-weight:400;color:#222;">!</div><div class="t tc" style="left:1821.7px;top:862px;font-size:19px;font-weight:400;color:#333;">g3</div><div class="t tc" style="left:1926px;top:862px;font-size:19px;font-weight:400;color:#222;">0.00</div><div class="t tc" style="left:2046px;top:862px;font-size:19px;font-weight:400;color:#222;">50.00%</div><div class="t tc" style="left:2160px;top:862px;font-size:19px;font-weight:400;color:#222;">2</div><div class="t tc" style="left:2254.5px;top:862px;font-size:19px;font-weight:400;color:#222;">!</div><div class="t tc" style="left:1821.7px;top:901px;font-size:19px;font-weight:400;color:#333;">e3</div><div class="t tc" style="left:1926px;top:901px;font-size:19px;font-weight:400;color:#222;">0.00</div><div class="t tc" style="left:2046px;top:901px;font-size:19px;font-weight:400;color:#222;">50.00%</div><div class="t tc" style="left:2160px;top:901px;font-size:19px;font-weight:400;color:#222;">2</div><div class="t tc" style="left:2254.5px;top:901px;font-size:19px;font-weight:400;color:#222;">!</div><div class="t tc" style="left:1821.7px;top:940px;font-size:19px;font-weight:400;color:#333;">e2</div><div class="t tc" style="left:1926px;top:940px;font-size:19px;font-weight:400;color:#222;">0.00</div><div class="t tc" style="left:2046px;top:940px;font-size:19px;font-weight:400;color:#222;">50.00%</div><div class="t tc" style="left:2160px;top:940px;font-size:19px;font-weight:400;color:#222;">2</div><div class="t tc" style="left:2254.5px;top:940px;font-size:19px;font-weight:400;color:#222;">!</div></div><div class="card " style="left:1752px;top:971px;width:578px;height:459px"></div><div class="brk" style="left:1746px;top:965px;width:15px;height:15px;border-left:1px solid #e0e0e0;border-top:1px solid #e0e0e0"></div><div class="brk" style="left:2320px;top:1420px;width:15px;height:15px;border-right:1px solid #e0e0e0;border-bottom:1px solid #e0e0e0"></div><svg class="r" style="left:1768.5px;top:986.5px;" width="31" height="31" viewBox="0 0 24 24" fill="#333"><path d="M6 13c-2.2 0-4 1.8-4 4s1.8 4 4 4 4-1.8 4-4-1.8-4-4-4zm0 6c-1.1 0-2-.9-2-2s.9-2 2-2 2 .9 2 2-.9 2-2 2zm6-16C9.8 3 8 4.8 8 7s1.8 4 4 4 4-1.8 4-4-1.8-4-4-4zm0 6c-1.1 0-2-.9-2-2s.9-2 2-2 2 .9 2 2-.9 2-2 2zm6 4c-2.2 0-4 1.8-4 4s1.8 4 4 4 4-1.8 4-4-1.8-4-4-4zm0 6c-1.1 0-2-.9-2-2s.9-2 2-2 2 .9 2 2-.9 2-2 2z"/></svg><div class="t " style="left:1821.7px;top:1001.5px;font-size:19.5px;font-weight:700;color:#3b3b3b;">Position Overview</div><div class="r" style="left:2264px;top:991.9px;width:47px;height:19px;background:#bdbdbd;border-radius:10px"></div><div class="r" style="left:2287.0px;top:988.4px;width:26px;height:26px;background:#237d73;border-radius:50%;box-shadow:0 1px 3px rgba(0,0,0,.3)"></div><div class="r" style="left:1762px;top:1031.8px;width:558px;height:2px;background:#1f6b63"></div><div class="t tc" style="left:1812.4px;top:1084.5px;font-size:16px;font-weight:400;color:#222;">Move</div><div class="t tc" style="left:1895px;top:1084.5px;font-size:16px;font-weight:400;color:#222;">Total</div><div class="t tc" style="left:1978.6px;top:1084.5px;font-size:16px;font-weight:400;color:#222;">Reps</div><div class="t tc" style="left:2078px;top:1084.5px;font-size:16px;font-weight:400;color:#222;">Library Items</div><div class="t tc" style="left:2196px;top:1084.5px;font-size:16px;font-weight:400;color:#222;">Ref Tree</div><div class="r" style="left:1773px;top:1102.5px;width:536px;height:1px;background-image:linear-gradient(to right,#cfcfcf 60%,transparent 60%);background-size:5px 1px"></div><div class="r" style="left:1773px;top:1140.0px;width:536px;height:1px;background-image:linear-gradient(to right,#cfcfcf 60%,transparent 60%);background-size:5px 1px"></div><div class="r" style="left:1773px;top:1177.5px;width:536px;height:1px;background-image:linear-gradient(to right,#cfcfcf 60%,transparent 60%);background-size:5px 1px"></div><div class="r" style="left:1773px;top:1215.0px;width:536px;height:1px;background-image:linear-gradient(to right,#cfcfcf 60%,transparent 60%);background-size:5px 1px"></div><div class="r" style="left:1773px;top:1252.0px;width:482.5px;height:1px;background-image:linear-gradient(to right,#cfcfcf 60%,transparent 60%);background-size:5px 1px"></div><div class="r" style="left:1773px;top:1103.5px;width:80px;height:36.5px;background:#7db8b1"></div><div class="t tc" style="left:1812.4px;top:1122.0px;font-size:19px;font-weight:400;color:#333;">e4</div><div class="t tc" style="left:1895px;top:1122.0px;font-size:19px;font-weight:400;color:#222;">512</div><div class="t tc" style="left:1978.6px;top:1122.0px;font-size:19px;font-weight:400;color:#222;">14</div><div class="t tc" style="left:2078px;top:1122.0px;font-size:19px;font-weight:400;color:#222;">1</div><div class="t tc" style="left:2196px;top:1122.0px;font-size:19px;font-weight:400;color:#222;">497</div><svg class="r" style="left:2272px;top:1107.0px;" width="22" height="22" viewBox="0 0 24 24" fill="none"><path d="M5.5 8.5l6.5 6.5 6.5-6.5" fill="none" stroke="#222" stroke-width="2.3"/></svg><div class="t tc" style="left:1812.4px;top:1159.5px;font-size:19px;font-weight:400;color:#333;">d4</div><div class="t tc" style="left:1895px;top:1159.5px;font-size:19px;font-weight:400;color:#222;">7</div><div class="t tc" style="left:1978.6px;top:1159.5px;font-size:19px;font-weight:400;color:#222;">6</div><div class="t tc" style="left:2078px;top:1159.5px;font-size:19px;font-weight:400;color:#222;">0</div><div class="t tc" style="left:2196px;top:1159.5px;font-size:19px;font-weight:400;color:#222;">1</div><svg class="r" style="left:2272px;top:1144.5px;" width="22" height="22" viewBox="0 0 24 24" fill="none"><path d="M5.5 8.5l6.5 6.5 6.5-6.5" fill="none" stroke="#222" stroke-width="2.3"/></svg><div class="t tc" style="left:1812.4px;top:1197.0px;font-size:19px;font-weight:400;color:#333;">e3</div><div class="t tc" style="left:1895px;top:1197.0px;font-size:19px;font-weight:400;color:#222;">1</div><div class="t tc" style="left:1978.6px;top:1197.0px;font-size:19px;font-weight:400;color:#222;">0</div><div class="t tc" style="left:2078px;top:1197.0px;font-size:19px;font-weight:400;color:#222;">0</div><div class="t tc" style="left:2196px;top:1197.0px;font-size:19px;font-weight:400;color:#222;">1</div><div class="t tc" style="left:1812.4px;top:1234.5px;font-size:19px;font-weight:700;color:#222;">All</div><div class="t tc" style="left:1895px;top:1234.5px;font-size:19px;font-weight:700;color:#222;">520</div><div class="t tc" style="left:1978.6px;top:1234.5px;font-size:19px;font-weight:700;color:#222;">20</div><div class="t tc" style="left:2078px;top:1234.5px;font-size:19px;font-weight:700;color:#222;">1</div><div class="t tc" style="left:2196px;top:1234.5px;font-size:19px;font-weight:700;color:#222;">499</div><div class="card " style="left:2350px;top:11px;width:520px;height:255px"></div><svg class="r" style="left:2365px;top:27px;" width="32" height="32" viewBox="0 0 24 24" fill="#333"><path d="M6.5 10h-2v7h2v-7zm6 0h-2v7h2v-7zm8.5 9H2v2h19v-2zm-2.5-9h-2v7h2v-7zm-7-6.74L16.71 6H6.29l5.21-2.74m0-2.26L2 6v2h19V6l-9.5-5z"/></svg><div class="t " style="left:2420.3px;top:41.5px;font-size:19.5px;font-weight:700;color:#3b3b3b;">My Library Moves</div><div class="r" style="left:2804px;top:32.0px;width:47px;height:19px;background:#bdbdbd;border-radius:10px"></div><div class="r" style="left:2827.0px;top:28.5px;width:26px;height:26px;background:#237d73;border-radius:50%;box-shadow:0 1px 3px rgba(0,0,0,.3)"></div><div class="r" style="left:2360.7px;top:72px;width:499.3000000000002px;height:2px;background:#1f6b63"></div><div class="t " style="left:2392.8px;top:116.5px;font-size:13.5px;font-weight:700;color:#333;letter-spacing:0.3px">MY MOVES</div><div class="t " style="left:2510.3px;top:116.5px;font-size:13.6px;font-weight:400;color:#444;letter-spacing:0.3px">MY GAMES</div><div class="r" style="left:2371.7px;top:146.5px;width:117.3px;height:2.5px;background:#237d73"></div><div class="t tc" style="left:2611.2px;top:207.5px;font-size:20.3px;font-weight:400;color:#888;font-style:italic">None of your games reached this position</div><div class="card " style="left:2350px;top:288px;width:520px;height:60px"></div><svg class="r" style="left:2366px;top:302.6px;" width="32" height="32" viewBox="0 0 24 24" fill="#333"><path d="M7 9H2V7h5v2zm0 3H2v2h5v-2zm13.59 7l-3.83-3.83c-.8.52-1.74.83-2.76.83-2.76 0-5-2.24-5-5s2.24-5 5-5 5 2.24 5 5c0 1.02-.31 1.96-.83 2.75L22 17.59 20.59 19zM17 11c0-1.65-1.35-3-3-3s-3 1.35-3 3 1.35 3 3 3 3-1.35 3-3zM2 19h10v-2H2v2z"/></svg><div class="t " style="left:2420.3px;top:317.6px;font-size:19.5px;font-weight:700;color:#3b3b3b;">Repertoire Match</div><div class="r" style="left:2801.8px;top:309.1px;width:47px;height:19px;background:#cfcfcf;border-radius:10px"></div><div class="r" style="left:2799.8px;top:305.6px;width:26px;height:26px;background:#fff;border-radius:50%;box-shadow:0 1px 3px rgba(0,0,0,.35)"></div><div class="card " style="left:2350px;top:370px;width:520px;height:60px"></div><svg class="r" style="left:2365.6px;top:383.7px" width="34" height="34" viewBox="0 0 34 34" fill="none" stroke="#222"><circle cx="17" cy="17" r="16.3" stroke-width="1.3"/><path d="M13.6 8.6C10.8 9 9.3 11 9.3 13.2C9.3 15.6 11.2 17.2 13.8 17.2H25.2" stroke-width="1.9"/><path d="M20.8 13.2L25 17.2L20.8 21.2" stroke-width="1.9"/></svg><div class="t " style="left:2420.3px;top:399.7px;font-size:19.5px;font-weight:700;color:#3b3b3b;">Transpositions</div><div class="r" style="left:2801.8px;top:391.2px;width:47px;height:19px;background:#cfcfcf;border-radius:10px"></div><div class="r" style="left:2799.8px;top:387.7px;width:26px;height:26px;background:#fff;border-radius:50%;box-shadow:0 1px 3px rgba(0,0,0,.35)"></div><div class="card " style="left:2350px;top:453px;width:520px;height:60px"></div><svg class="r" style="left:2366.0px;top:468.3px;" width="30" height="30" viewBox="0 0 24 24" fill="#333"><path d="M3 4h15v2H3zM3 8h15v2H3zM3 12h15v2H3zM3 16h8v2H3zM21.5 13.5L23 15l-6.99 7-4.51-4.5L13 16l3.01 3 5.49-5.5z"/></svg><div class="t " style="left:2420.3px;top:482.3px;font-size:19.5px;font-weight:700;color:#3b3b3b;">Review Repertoire</div><div class="r" style="left:2801.8px;top:473.8px;width:47px;height:19px;background:#cfcfcf;border-radius:10px"></div><div class="r" style="left:2799.8px;top:470.3px;width:26px;height:26px;background:#fff;border-radius:50%;box-shadow:0 1px 3px rgba(0,0,0,.35)"></div><div class="card " style="left:2350px;top:535px;width:520px;height:60px"></div><svg class="r" style="left:2366.0px;top:550.8px" width="30" height="30" viewBox="0 0 24 24"><polygon points="12.00,1.50 15.14,4.42 19.42,4.58 19.58,8.86 22.50,12.00 19.58,15.14 19.42,19.42 15.14,19.58 12.00,22.50 8.86,19.58 4.58,19.42 4.42,15.14 1.50,12.00 4.42,8.86 4.58,4.58 8.86,4.42" fill="none" stroke="#333" stroke-width="1.9" stroke-linejoin="round"/><rect x="11" y="6.5" width="2" height="7" fill="#333"/><rect x="11" y="15.5" width="2" height="2" fill="#333"/></svg><div class="t " style="left:2420.3px;top:564.8px;font-size:19.5px;font-weight:700;color:#3b3b3b;">Missing Moves</div><div class="r" style="left:2801.8px;top:556.3px;width:47px;height:19px;background:#cfcfcf;border-radius:10px"></div><div class="r" style="left:2799.8px;top:552.8px;width:26px;height:26px;background:#fff;border-radius:50%;box-shadow:0 1px 3px rgba(0,0,0,.35)"></div><div class="card " style="left:2350px;top:618px;width:520px;height:60px"></div><svg class="r" style="left:2366.0px;top:633.8px;" width="30" height="30" viewBox="0 0 24 24" fill="#333"><path d="M17 11v6.97l-5-2.14-5 2.14V5h6V3H7c-1.1 0-2 .9-2 2v16l7-3 7 3V11h-2zM21 3.5L19.6 2.1 16.1 5.6 14.6 4.1 13.2 5.5 16.1 8.4z"/></svg><div class="t " style="left:2420.3px;top:647.8px;font-size:19.5px;font-weight:700;color:#3b3b3b;">Bookmarks</div><div class="r" style="left:2801.8px;top:639.3px;width:47px;height:19px;background:#cfcfcf;border-radius:10px"></div><div class="r" style="left:2799.8px;top:635.8px;width:26px;height:26px;background:#fff;border-radius:50%;box-shadow:0 1px 3px rgba(0,0,0,.35)"></div><div class="card " style="left:2350px;top:701px;width:520px;height:60px"></div><svg class="r" style="left:2368.70px;top:718.00px" width="26.60" height="26.60" viewBox="0 0 28 28" fill="none" stroke="#333" stroke-width="2.1"><path d="M23.66 21.28A12.1 12.1 0 1 0 21.28 23.66"/><circle cx="14" cy="14" r="6.8"/><path d="M14 14L22.3 22.3"/><circle cx="14" cy="14" r="2" fill="#333"/></svg><div class="t " style="left:2420.3px;top:730.3px;font-size:19.5px;font-weight:700;color:#3b3b3b;">Position Library</div><div class="r" style="left:2801.8px;top:721.8px;width:47px;height:19px;background:#cfcfcf;border-radius:10px"></div><div class="r" style="left:2799.8px;top:718.3px;width:26px;height:26px;background:#fff;border-radius:50%;box-shadow:0 1px 3px rgba(0,0,0,.35)"></div><div class="card " style="left:2350px;top:783px;width:520px;height:60px"></div><svg class="r" style="left:2367.2px;top:798.3px;" width="31" height="31" viewBox="0 0 24 24" fill="#333"><path d="M3 4h18v2H3zM3 8h18v2H3zM3 12h18v2H3zM3 16h12v2H3z"/></svg><div class="t " style="left:2420.3px;top:812.8px;font-size:19.5px;font-weight:700;color:#3b3b3b;">Variations In Repertoire</div><div class="r" style="left:2801.8px;top:804.3px;width:47px;height:19px;background:#cfcfcf;border-radius:10px"></div><div class="r" style="left:2799.8px;top:800.8px;width:26px;height:26px;background:#fff;border-radius:50%;box-shadow:0 1px 3px rgba(0,0,0,.35)"></div><div class="card " style="left:2350px;top:866px;width:520px;height:60px"></div><svg class="r" style="left:2366.9px;top:881.1px;" width="31.2" height="31.2" viewBox="0 0 24 24" fill="none"><path d="M11.40 20.58A8.6 8.6 0 0 1 11.40 3.42M12.60 3.42A8.6 8.6 0 0 1 20.58 11.40M20.58 12.60A8.6 8.6 0 0 1 12.60 20.58" fill="none" stroke="#333" stroke-width="3.2"/></svg><div class="t " style="left:2420.3px;top:895.7px;font-size:19.5px;font-weight:700;color:#3b3b3b;">Repertoire Visualization</div><div class="r" style="left:2801.8px;top:887.2px;width:47px;height:19px;background:#cfcfcf;border-radius:10px"></div><div class="r" style="left:2799.8px;top:883.7px;width:26px;height:26px;background:#fff;border-radius:50%;box-shadow:0 1px 3px rgba(0,0,0,.35)"></div><div class="card " style="left:2350px;top:949px;width:520px;height:60px"></div><svg class="r" style="left:2366.2000000000003px;top:962.7px;" width="32.4" height="32.4" viewBox="0 0 24 24" fill="#333"><circle cx="6" cy="6" r="1.0"/><circle cx="6" cy="10" r="1.0"/><circle cx="6" cy="14" r="1.0"/><circle cx="6" cy="18" r="1.0"/><circle cx="10" cy="6" r="1.0"/><circle cx="10" cy="10" r="1.5"/><circle cx="10" cy="14" r="1.5"/><circle cx="10" cy="18" r="1.0"/><circle cx="14" cy="6" r="1.0"/><circle cx="14" cy="10" r="1.5"/><circle cx="14" cy="14" r="1.5"/><circle cx="14" cy="18" r="1.0"/><circle cx="18" cy="6" r="1.0"/><circle cx="18" cy="10" r="1.0"/><circle cx="18" cy="14" r="1.0"/><circle cx="18" cy="18" r="1.0"/><circle cx="3" cy="10" r="0.5"/><circle cx="3" cy="14" r="0.5"/><circle cx="21" cy="10" r="0.5"/><circle cx="21" cy="14" r="0.5"/><circle cx="10" cy="3" r="0.5"/><circle cx="14" cy="3" r="0.5"/><circle cx="10" cy="21" r="0.5"/><circle cx="14" cy="21" r="0.5"/></svg><div class="t " style="left:2420.3px;top:978.7px;font-size:19.5px;font-weight:700;color:#3b3b3b;">Space Visualizer</div><div class="r" style="left:2801.8px;top:970.2px;width:47px;height:19px;background:#cfcfcf;border-radius:10px"></div><div class="r" style="left:2799.8px;top:966.7px;width:26px;height:26px;background:#fff;border-radius:50%;box-shadow:0 1px 3px rgba(0,0,0,.35)"></div><div class="t " style="left:2372.2px;top:1056px;font-size:21.6px;font-weight:400;color:#222;">Enable Reordering</div><div class="r" style="left:2566.6px;top:1046.5px;width:47px;height:19px;background:#cfcfcf;border-radius:10px"></div><div class="r" style="left:2564.6px;top:1043.0px;width:26px;height:26px;background:#fff;border-radius:50%;box-shadow:0 1px 3px rgba(0,0,0,.35)"></div><div class="r" style="left:32.2px;top:1490.2px;width:53px;height:53px;background:#237d73;border-radius:50%;box-shadow:0 3px 5px -1px rgba(0,0,0,.2),0 6px 10px 0 rgba(0,0,0,.14),0 1px 18px 0 rgba(0,0,0,.12)"></div><svg class="r" style="left:42.7px;top:1500.7px;" width="32" height="32" viewBox="0 0 24 24" fill="#fff"><path d="M19 13h-6v6h-2v-6H5v-2h6V5h2v6h6v2z"/></svg></body></html>
